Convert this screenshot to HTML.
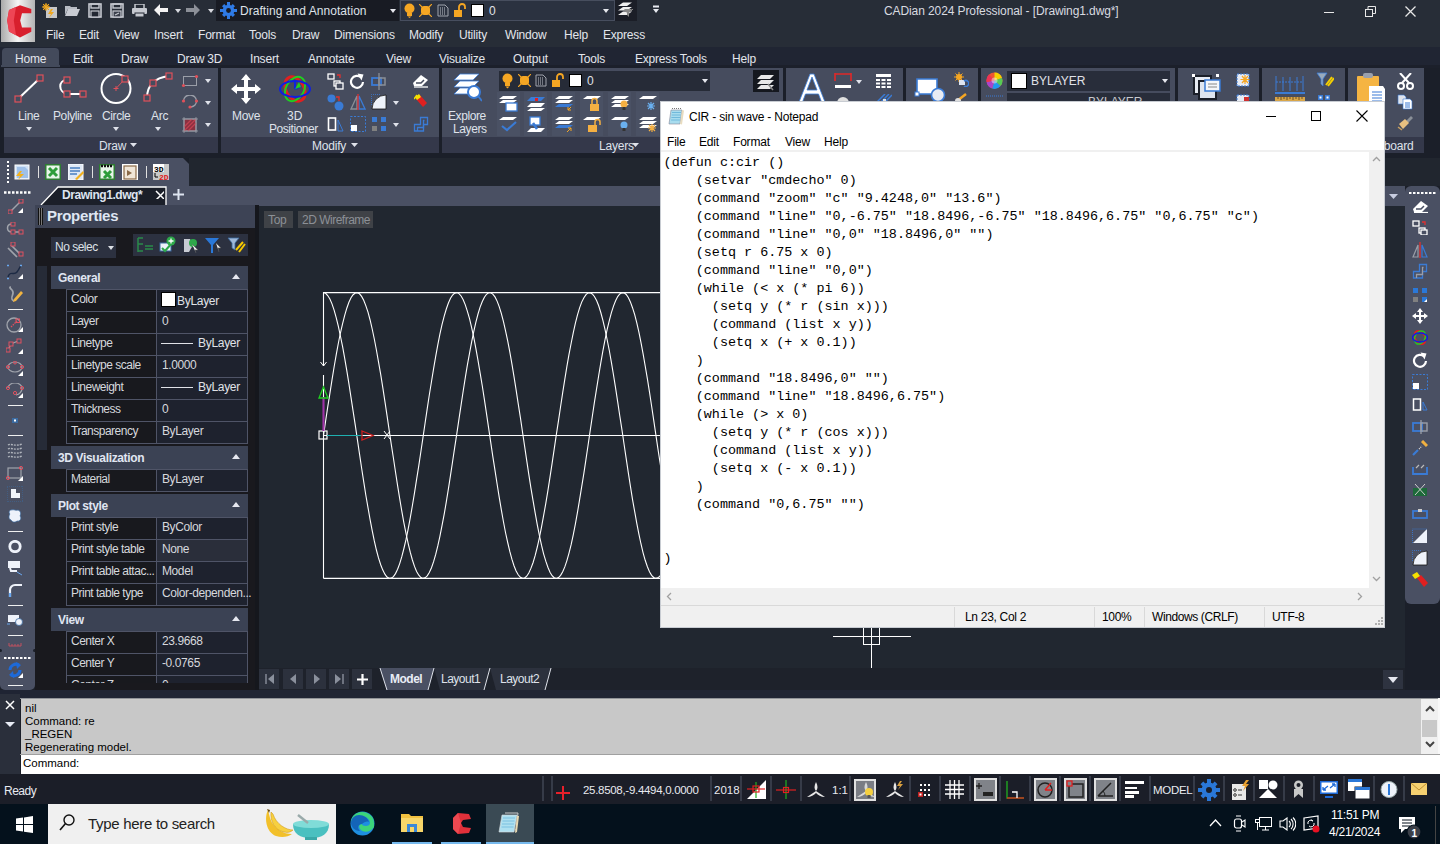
<!DOCTYPE html>
<html><head><meta charset="utf-8">
<style>
*{margin:0;padding:0;box-sizing:border-box}
html,body{width:1440px;height:844px;overflow:hidden;background:#1b1f29;font-family:"Liberation Sans",sans-serif;font-size:12px;color:#e6e8ee}
.a{position:absolute;display:block}
.t{position:absolute;white-space:nowrap;line-height:1}
.m{position:absolute;white-space:pre;line-height:1;font-family:"Liberation Mono",monospace}
</style></head><body>
<div class="a" style="left:0px;top:0px;width:1440px;height:47px;background:#272d37;"></div>
<div class="a" style="left:1px;top:0px;width:34px;height:42px;background:linear-gradient(90deg,#a9a9a9 0%,#f6f6f6 50%,#b4b4b4 100%);"></div>
<svg class="a" style="left:1px;top:0px;" width="34" height="42" viewBox="0 0 34 42"><path d="M19 5.2L30.3 9V13.3H21L19.2 20.4L21 27.5H30.3V31.8L19 37.4L8 31.5L6.2 20.4L8 10Z" fill="#d81f2d"/><path d="M15 7L8 10L6.2 20.4L8 31.5L15 35.3L12.8 20.4Z" fill="#ee4555"/></svg>
<svg class="a" style="left:42px;top:3px;" width="16" height="15" viewBox="0 0 16 15"><rect x="4" y="4" width="11" height="11" fill="#c8c8c8"/><path d="M9 6 L6 11 L9 11 L7 15 L12 9 L9 9 L11 6Z" fill="#f2a81d"/><circle cx="4" cy="4" r="2.2" fill="none" stroke="#f2a81d" stroke-width="1.2"/><path d="M4 0V8M0 4H8M1 1L7 7M7 1L1 7" stroke="#f2a81d" stroke-width="1"/></svg>
<svg class="a" style="left:65px;top:4px;" width="15" height="12" viewBox="0 0 15 12"><path d="M0 2H5L6 3H12V5H3L0 11Z" fill="#b8bcc4"/><path d="M3 5H15L12 12H0Z" fill="#c9ccd3"/></svg>
<svg class="a" style="left:88px;top:3px;" width="14" height="15" viewBox="0 0 14 15"><rect x="1" y="1" width="12" height="13" fill="none" stroke="#c6c9d0" stroke-width="1.6"/><rect x="3" y="1" width="8" height="4" fill="none" stroke="#c6c9d0" stroke-width="1.4"/><rect x="3" y="8" width="8" height="6" fill="#232833" stroke="#c6c9d0" stroke-width="1.2"/></svg>
<svg class="a" style="left:110px;top:3px;" width="14" height="15" viewBox="0 0 14 15"><rect x="1" y="1" width="12" height="13" fill="none" stroke="#c6c9d0" stroke-width="1.6"/><rect x="3" y="1" width="8" height="4" fill="none" stroke="#c6c9d0" stroke-width="1.4"/><rect x="3" y="8" width="8" height="6" fill="#3a3f4b" stroke="#c6c9d0" stroke-width="1.2"/><path d="M5 12L9 10" stroke="#c6c9d0" stroke-width="1.2"/></svg>
<svg class="a" style="left:132px;top:4px;" width="15" height="13" viewBox="0 0 15 13"><rect x="3" y="0" width="9" height="5" fill="none" stroke="#c6c9d0" stroke-width="1.5"/><rect x="0" y="4" width="15" height="6" rx="1" fill="#c6c9d0"/><rect x="3" y="9" width="9" height="4" fill="#c6c9d0" stroke="#232833" stroke-width="1"/></svg>
<svg class="a" style="left:154px;top:4px;" width="14" height="12" viewBox="0 0 14 12"><path d="M0 6 L6 0 L6 4 L14 4 L14 8 L6 8 L6 12Z" fill="#f4f4f4"/></svg>
<svg class="a" style="left:175px;top:9px;" width="6" height="4" viewBox="0 0 6 4"><path d="M0 0H6L3.0 4Z" fill="#d8dae0"/></svg>
<svg class="a" style="left:186px;top:4px;" width="14" height="12" viewBox="0 0 14 12"><path d="M14 6 L8 0 L8 4 L0 4 L0 8 L8 8 L8 12Z" fill="#8c9098"/></svg>
<svg class="a" style="left:208px;top:9px;" width="6" height="4" viewBox="0 0 6 4"><path d="M0 0H6L3.0 4Z" fill="#d8dae0"/></svg>
<div class="a" style="left:216px;top:0px;width:183px;height:21px;background:#181b23;"></div>
<svg class="a" style="left:220px;top:2px;" width="17" height="17" viewBox="0 0 17 17"><g fill="#2f7be6"><circle cx="8.5" cy="8.5" r="5.8"/><path d="M7 0H10V3H7ZM7 14H10V17H7ZM0 7H3V10H0ZM14 7H17V10H14Z"/><path d="M2 4.2 L4.2 2 L6 3.8 L3.8 6Z M15 4.2 L12.8 2 L11 3.8 L13.2 6Z M2 12.8 L4.2 15 L6 13.2 L3.8 11Z M15 12.8 L12.8 15 L11 13.2 L13.2 11Z"/></g><circle cx="8.5" cy="8.5" r="2.4" fill="#181b23"/></svg>
<div class="t" style="left:240px;top:5px;font-size:12px;color:#dfe2e8;letter-spacing:0.05px">Drafting and Annotation</div>
<svg class="a" style="left:390px;top:9px;" width="6" height="4" viewBox="0 0 6 4"><path d="M0 0H6L3.0 4Z" fill="#e6e8ee"/></svg>
<div class="a" style="left:400px;top:0px;width:215px;height:21px;background:#2b3240;border:1px solid #474e5e"></div>
<svg class="a" style="left:404px;top:3px;" width="11" height="15" viewBox="0 0 11 15"><circle cx="5.5" cy="5.5" r="5" fill="#f5a623"/><rect x="3" y="10" width="5" height="3" fill="#f5a623"/><path d="M3.5 13.5H7.5L5.5 15Z" fill="#f5a623"/></svg>
<svg class="a" style="left:419px;top:4px;" width="13" height="13" viewBox="0 0 13 13"><rect x="2" y="2" width="9" height="9" rx="3" fill="#f5a623"/><path d="M0 0L3 3M13 0L10 3M0 13L3 10M13 13L10 10" stroke="#f5a623" stroke-width="1.2"/></svg>
<svg class="a" style="left:437px;top:4px;" width="12" height="13" viewBox="0 0 12 13"><path d="M1 1H8L11 4V12H1Z" fill="none" stroke="#a0a4ad" stroke-width="1"/><path d="M3 4H8M3 6H9M3 8H9M3 10H8" stroke="#c0c4cc" stroke-width="1" stroke-dasharray="1 1"/></svg>
<svg class="a" style="left:453px;top:3px;" width="13" height="14" viewBox="0 0 13 14"><rect x="1" y="7" width="8" height="7" fill="#f5a623"/><path d="M6 7V4A3 3 0 0 1 12 4V6" fill="none" stroke="#f5a623" stroke-width="1.8"/></svg>
<div class="a" style="left:471px;top:4px;width:13px;height:13px;background:#ffffff;border:1px solid #000"></div>
<div class="t" style="left:489px;top:5px;font-size:12px;color:#e0e2e8;">0</div>
<svg class="a" style="left:603px;top:9px;" width="6" height="4" viewBox="0 0 6 4"><path d="M0 0H6L3.0 4Z" fill="#e6e8ee"/></svg>
<div class="a" style="left:615px;top:0px;width:22px;height:21px;background:#1b1e27;"></div>
<svg class="a" style="left:617px;top:2px;" width="18" height="16" viewBox="0 0 18 16"><path d="M6 0.5H15L10 4H1Z M6 5H15L10 8.5H1Z M6 9.5H15L10 13H1Z" fill="#f0f0f0"/><path d="M7 7H15L12 11V15L10 13V11Z" fill="#8a8a8a"/><path d="M14 9L16 7" stroke="#888" stroke-width="1"/></svg>
<svg class="a" style="left:653px;top:5px;" width="6" height="9" viewBox="0 0 6 9"><rect x="0" y="0.5" width="6" height="2" fill="#e8eaf0"/><path d="M0 4H6L3 8Z" fill="#e8eaf0"/></svg>
<div class="t" style="left:884px;top:5px;font-size:12px;color:#d9dbe0;letter-spacing:-0.1px">CADian 2024 Professional - [Drawing1.dwg*]</div>
<div class="a" style="left:1324px;top:12px;width:10px;height:1px;background:#e8e8e8;"></div>
<svg class="a" style="left:1365px;top:6px;" width="11" height="11" viewBox="0 0 11 11"><rect x="0.5" y="3.5" width="7" height="7" fill="none" stroke="#e8e8e8"/><path d="M3 3.5V0.5H10.5V7.5H7.5" fill="none" stroke="#e8e8e8"/></svg>
<svg class="a" style="left:1405px;top:6px;" width="11" height="11" viewBox="0 0 11 11"><path d="M0.5 0.5L10.5 10.5M10.5 0.5L0.5 10.5" stroke="#e8e8e8" stroke-width="1.3"/></svg>
<div class="t" style="left:46px;top:29px;font-size:12px;color:#e3e6ec;letter-spacing:-0.2px">File</div>
<div class="t" style="left:79px;top:29px;font-size:12px;color:#e3e6ec;letter-spacing:-0.2px">Edit</div>
<div class="t" style="left:114px;top:29px;font-size:12px;color:#e3e6ec;letter-spacing:-0.2px">View</div>
<div class="t" style="left:154px;top:29px;font-size:12px;color:#e3e6ec;letter-spacing:-0.2px">Insert</div>
<div class="t" style="left:198px;top:29px;font-size:12px;color:#e3e6ec;letter-spacing:-0.2px">Format</div>
<div class="t" style="left:249px;top:29px;font-size:12px;color:#e3e6ec;letter-spacing:-0.2px">Tools</div>
<div class="t" style="left:292px;top:29px;font-size:12px;color:#e3e6ec;letter-spacing:-0.2px">Draw</div>
<div class="t" style="left:334px;top:29px;font-size:12px;color:#e3e6ec;letter-spacing:-0.2px">Dimensions</div>
<div class="t" style="left:409px;top:29px;font-size:12px;color:#e3e6ec;letter-spacing:-0.2px">Modify</div>
<div class="t" style="left:459px;top:29px;font-size:12px;color:#e3e6ec;letter-spacing:-0.2px">Utility</div>
<div class="t" style="left:505px;top:29px;font-size:12px;color:#e3e6ec;letter-spacing:-0.2px">Window</div>
<div class="t" style="left:564px;top:29px;font-size:12px;color:#e3e6ec;letter-spacing:-0.2px">Help</div>
<div class="t" style="left:603px;top:29px;font-size:12px;color:#e3e6ec;letter-spacing:-0.2px">Express</div>
<div class="a" style="left:0px;top:47px;width:1440px;height:21px;background:#202533;"></div>
<div class="a" style="left:0px;top:65px;width:1440px;height:3px;background:#1c202b;"></div>
<div class="a" style="left:2px;top:48px;width:57px;height:19px;background:#434a5b;border-radius:4px 4px 0 0"></div>
<div class="a" style="left:1px;top:65px;width:59px;height:2px;background:#434a5b;"></div>
<div class="t" style="left:15px;top:53px;font-size:12px;color:#e3e6ec;letter-spacing:-0.2px">Home</div>
<div class="t" style="left:73px;top:53px;font-size:12px;color:#e3e6ec;letter-spacing:-0.2px">Edit</div>
<div class="t" style="left:121px;top:53px;font-size:12px;color:#e3e6ec;letter-spacing:-0.2px">Draw</div>
<div class="t" style="left:177px;top:53px;font-size:12px;color:#e3e6ec;letter-spacing:-0.2px">Draw 3D</div>
<div class="t" style="left:250px;top:53px;font-size:12px;color:#e3e6ec;letter-spacing:-0.2px">Insert</div>
<div class="t" style="left:308px;top:53px;font-size:12px;color:#e3e6ec;letter-spacing:-0.2px">Annotate</div>
<div class="t" style="left:386px;top:53px;font-size:12px;color:#e3e6ec;letter-spacing:-0.2px">View</div>
<div class="t" style="left:439px;top:53px;font-size:12px;color:#e3e6ec;letter-spacing:-0.2px">Visualize</div>
<div class="t" style="left:513px;top:53px;font-size:12px;color:#e3e6ec;letter-spacing:-0.2px">Output</div>
<div class="t" style="left:578px;top:53px;font-size:12px;color:#e3e6ec;letter-spacing:-0.2px">Tools</div>
<div class="t" style="left:635px;top:53px;font-size:12px;color:#e3e6ec;letter-spacing:-0.2px">Express Tools</div>
<div class="t" style="left:732px;top:53px;font-size:12px;color:#e3e6ec;letter-spacing:-0.2px">Help</div>
<div class="a" style="left:4px;top:68px;width:214px;height:69px;background:#464c5e;"></div>
<div class="a" style="left:4px;top:137px;width:214px;height:16px;background:#34384a;"></div>
<div class="t" style="left:99px;top:140px;font-size:12px;color:#dfe2ea;letter-spacing:-0.2px">Draw</div>
<svg class="a" style="left:130px;top:143px" width="7" height="4"><path d="M0 0H7L3.5 4Z" fill="#dfe2ea"/></svg>
<svg class="a" style="left:12px;top:72px;" width="34" height="34" viewBox="0 0 34 34"><path d="M6 27 L28 6" stroke="#fff" stroke-width="2"/><rect x="3" y="24" width="6" height="6" fill="#464c5e" stroke="#e0505a" stroke-width="1.2"/><rect x="25" y="3" width="6" height="6" fill="#464c5e" stroke="#e0505a" stroke-width="1.2"/></svg>
<div class="t" style="left:18px;top:110px;font-size:12px;color:#dfe2ea;letter-spacing:-0.3px">Line</div>
<svg class="a" style="left:26px;top:127px;" width="6" height="4" viewBox="0 0 6 4"><path d="M0 0H6L3.0 4Z" fill="#dfe2ea"/></svg>
<svg class="a" style="left:56px;top:76px;" width="34" height="26" viewBox="0 0 34 26"><path d="M11 4 C2 4 2 16 11 18 L26 18" fill="none" stroke="#fff" stroke-width="2"/><rect x="8" y="1" width="6" height="6" fill="#464c5e" stroke="#e0505a" stroke-width="1.2"/><rect x="8" y="15" width="6" height="6" fill="#464c5e" stroke="#e0505a" stroke-width="1.2"/><rect x="24" y="15" width="6" height="6" fill="#464c5e" stroke="#e0505a" stroke-width="1.2"/></svg>
<div class="t" style="left:53px;top:110px;font-size:12px;color:#dfe2ea;letter-spacing:-0.4px">Polyline</div>
<svg class="a" style="left:99px;top:72px;" width="34" height="34" viewBox="0 0 34 34"><circle cx="17" cy="16.5" r="14.5" fill="none" stroke="#fff" stroke-width="2"/><path d="M17 16.5L25 8M14.5 16.5H19.5M17 14V19" stroke="#e0505a" stroke-width="1"/><rect x="23" y="4" width="6" height="6" fill="#464c5e" stroke="#e0505a" stroke-width="1.2"/></svg>
<div class="t" style="left:102px;top:110px;font-size:12px;color:#dfe2ea;letter-spacing:-0.4px">Circle</div>
<svg class="a" style="left:113px;top:127px;" width="6" height="4" viewBox="0 0 6 4"><path d="M0 0H6L3.0 4Z" fill="#dfe2ea"/></svg>
<svg class="a" style="left:142px;top:72px;" width="34" height="34" viewBox="0 0 34 34"><path d="M5 26 C5 14 12 6 27 4" fill="none" stroke="#fff" stroke-width="2"/><rect x="2" y="23" width="6" height="6" fill="#464c5e" stroke="#e0505a" stroke-width="1.2"/><rect x="8" y="8" width="6" height="6" fill="#464c5e" stroke="#e0505a" stroke-width="1.2"/><rect x="24" y="1" width="6" height="6" fill="#464c5e" stroke="#e0505a" stroke-width="1.2"/></svg>
<div class="t" style="left:151px;top:110px;font-size:12px;color:#dfe2ea;letter-spacing:-0.3px">Arc</div>
<svg class="a" style="left:155px;top:127px;" width="6" height="4" viewBox="0 0 6 4"><path d="M0 0H6L3.0 4Z" fill="#dfe2ea"/></svg>
<svg class="a" style="left:181px;top:74px;" width="18" height="14" viewBox="0 0 18 14"><rect x="2.5" y="2.5" width="13" height="9" fill="none" stroke="#9a9ea8" stroke-width="1"/><circle cx="2.5" cy="11.5" r="1.6" fill="#e0505a"/><circle cx="15.5" cy="2.5" r="1.6" fill="#e0505a"/></svg>
<svg class="a" style="left:205px;top:79px;" width="6" height="4" viewBox="0 0 6 4"><path d="M0 0H6L3.0 4Z" fill="#dfe2ea"/></svg>
<svg class="a" style="left:181px;top:95px;" width="18" height="14" viewBox="0 0 18 14"><path d="M2.5 6 A6.5 6 0 0 1 15.5 6 A6.5 6 0 0 1 10 12" fill="none" stroke="#9a9ea8" stroke-width="1.4"/><circle cx="2.5" cy="6" r="1.6" fill="#e0505a"/><circle cx="15.5" cy="6" r="1.6" fill="#e0505a"/><circle cx="9" cy="12" r="1.6" fill="#e0505a"/></svg>
<svg class="a" style="left:205px;top:101px;" width="6" height="4" viewBox="0 0 6 4"><path d="M0 0H6L3.0 4Z" fill="#dfe2ea"/></svg>
<svg class="a" style="left:182px;top:117px;" width="16" height="16" viewBox="0 0 16 16"><rect x="2" y="2" width="12" height="12" fill="#8a3040" stroke="#9a9ea8"/><path d="M2 10L10 2M2 14L14 2M6 14L14 6" stroke="#c04050" stroke-width="1.3"/><path d="M0 2H16M0 14H16M2 0V16M14 0V16" stroke="#9a9ea8" stroke-width=".8"/></svg>
<svg class="a" style="left:205px;top:123px;" width="6" height="4" viewBox="0 0 6 4"><path d="M0 0H6L3.0 4Z" fill="#dfe2ea"/></svg>
<div class="a" style="left:221px;top:68px;width:218px;height:69px;background:#464c5e;"></div>
<div class="a" style="left:221px;top:137px;width:218px;height:16px;background:#34384a;"></div>
<div class="t" style="left:312px;top:140px;font-size:12px;color:#dfe2ea;letter-spacing:-0.2px">Modify</div>
<svg class="a" style="left:351px;top:143px" width="7" height="4"><path d="M0 0H7L3.5 4Z" fill="#dfe2ea"/></svg>
<svg class="a" style="left:230px;top:73px;" width="32" height="32" viewBox="0 0 32 32"><path d="M16 1L21 7H18V14H25V11L31 16L25 21V18H18V25H21L16 31L11 25H14V18H7V21L1 16L7 11V14H14V7H11Z" fill="#fff"/></svg>
<div class="t" style="left:232px;top:110px;font-size:12px;color:#dfe2ea;letter-spacing:-0.3px">Move</div>
<svg class="a" style="left:279px;top:74px;" width="33" height="30" viewBox="0 0 33 30"><ellipse cx="16" cy="15" rx="9" ry="13" fill="none" stroke="#e02020" stroke-width="3" transform="rotate(-30 16 15)"/><ellipse cx="16" cy="15" rx="9" ry="13" fill="none" stroke="#20d020" stroke-width="2" transform="rotate(30 16 15)"/><ellipse cx="16" cy="15" rx="15" ry="8" fill="none" stroke="#1020e0" stroke-width="2"/><path d="M16 15L16 6M16 15L22 12" stroke="#1020e0" stroke-width="2"/><path d="M16 15L20 8L22 13Z" fill="#20d020"/></svg>
<div class="t" style="left:287px;top:110px;font-size:12px;color:#dfe2ea;">3D</div>
<div class="t" style="left:269px;top:123px;font-size:12px;color:#dfe2ea;letter-spacing:-0.45px">Positioner</div>
<svg class="a" style="left:327px;top:73px;" width="17" height="17" viewBox="0 0 17 17"><rect x="1" y="1" width="6" height="5" fill="none" stroke="#fff" stroke-width="1.3"/><rect x="7" y="8" width="6" height="5" fill="none" stroke="#fff" stroke-width="1.3"/><rect x="9" y="10" width="7" height="6" fill="#464c5e" stroke="#fff" stroke-width="1.3"/><path d="M10 2L13 2L13 5" fill="none" stroke="#e03030" stroke-width="1.3"/></svg>
<svg class="a" style="left:349px;top:73px;" width="16" height="16" viewBox="0 0 16 16"><path d="M12.2 4.5A6 6 0 1 0 14 9" fill="none" stroke="#fff" stroke-width="2.2"/><path d="M8.5 0.5L14.5 1.5L12.5 7.5Z" fill="#fff"/></svg>
<svg class="a" style="left:371px;top:73px;" width="16" height="17" viewBox="0 0 16 17"><rect x="1" y="5" width="9" height="7" fill="none" stroke="#3a7bd5" stroke-width="1.8"/><path d="M8 0V17" stroke="#8a8e96" stroke-width="1.3"/><rect x="8" y="5" width="6" height="7" fill="none" stroke="#8a8e96" stroke-width="1.5"/></svg>
<svg class="a" style="left:412px;top:74px;" width="17" height="14" viewBox="0 0 17 14"><path d="M9 1L16 6L10 12H2L1 9Z" fill="#fff"/><path d="M4 9H9L12 6" fill="none" stroke="#464c5e" stroke-width="1.5"/><path d="M2 13H16" stroke="#fff" stroke-width="1.3"/></svg>
<svg class="a" style="left:327px;top:94px;" width="17" height="17" viewBox="0 0 17 17"><circle cx="4.5" cy="4.5" r="4" fill="#3a7bd5"/><circle cx="12" cy="12" r="4.5" fill="#3a7bd5"/><path d="M9 3L12 3L12 7" fill="none" stroke="#e03030" stroke-width="1.3"/></svg>
<svg class="a" style="left:350px;top:94px;" width="16" height="16" viewBox="0 0 16 16"><path d="M7 2V15H1Z" fill="none" stroke="#8a8e96" stroke-width="1.3"/><path d="M9 2V15H15Z" fill="none" stroke="#3a7bd5" stroke-width="1.3"/><path d="M8 0V16" stroke="#e03030" stroke-width="1.3"/></svg>
<svg class="a" style="left:371px;top:94px;" width="16" height="16" viewBox="0 0 16 16"><path d="M1 15A14 14 0 0 1 15 1V15Z" fill="#eef2fa" stroke="#111" stroke-width=".8"/><path d="M0.5 11V0.5H10" fill="none" stroke="#3a7bd5" stroke-width=".8" stroke-dasharray="1 1"/></svg>
<svg class="a" style="left:393px;top:101px;" width="6" height="4" viewBox="0 0 6 4"><path d="M0 0H6L3.0 4Z" fill="#dfe2ea"/></svg>
<svg class="a" style="left:414px;top:94px;" width="14" height="15" viewBox="0 0 14 15"><path d="M2 5L6 1L13 9L9 13Z" fill="#e02020"/><path d="M1 3L5 0L7 3L3 6Z" fill="#f5e000"/><path d="M0 5L3 1" stroke="#f5e000" stroke-width="1.5"/></svg>
<svg class="a" style="left:327px;top:116px;" width="17" height="17" viewBox="0 0 17 17"><rect x="1.5" y="2" width="7" height="12" fill="none" stroke="#fff" stroke-width="1.6"/><path d="M11 4V15H16Z" fill="none" stroke="#3a7bd5" stroke-width="1"/></svg>
<svg class="a" style="left:350px;top:116px;" width="16" height="16" viewBox="0 0 16 16"><rect x="0.5" y="0.5" width="15" height="15" fill="none" stroke="#3a7bd5" stroke-width="1" stroke-dasharray="2 1.5"/><rect x="1" y="9" width="6" height="6" fill="#fff"/></svg>
<svg class="a" style="left:371px;top:116px;" width="16" height="16" viewBox="0 0 16 16"><rect x="1" y="1" width="5" height="5" fill="#3a7bd5"/><rect x="10" y="1" width="5" height="5" fill="#3a7bd5"/><rect x="1" y="10" width="5" height="5" fill="#808080"/><rect x="10" y="10" width="5" height="5" fill="#3a7bd5"/></svg>
<svg class="a" style="left:393px;top:123px;" width="6" height="4" viewBox="0 0 6 4"><path d="M0 0H6L3.0 4Z" fill="#dfe2ea"/></svg>
<svg class="a" style="left:413px;top:116px;" width="16" height="16" viewBox="0 0 16 16"><path d="M1.5 15V8.5H7.5V1.5H14.5V8.5H10.5V15Z" fill="none" stroke="#3a7bd5" stroke-width="1.3"/><path d="M4.5 15V11.5H10.5V4.5H11.5" fill="none" stroke="#3a7bd5" stroke-width="1.3"/></svg>
<div class="a" style="left:442px;top:68px;width:341px;height:69px;background:#464c5e;"></div>
<div class="a" style="left:442px;top:137px;width:341px;height:16px;background:#34384a;"></div>
<div class="t" style="left:599px;top:140px;font-size:12px;color:#dfe2ea;letter-spacing:-0.2px">Layers</div>
<svg class="a" style="left:632px;top:143px" width="7" height="4"><path d="M0 0H7L3.5 4Z" fill="#dfe2ea"/></svg>
<svg class="a" style="left:452px;top:72px;" width="30" height="32" viewBox="0 0 30 32"><path d="M8 2H27L21 8H2Z M8 9H27L21 15H2Z M8 16H27L21 22H2Z" fill="#fff" stroke="#3a7bd5" stroke-width=".8"/><circle cx="22" cy="20" r="6" fill="#fff" stroke="#3a7bd5" stroke-width="2"/><path d="M26 24L30 29" stroke="#3a7bd5" stroke-width="2"/></svg>
<div class="t" style="left:448px;top:110px;font-size:12px;color:#dfe2ea;letter-spacing:-0.4px">Explore</div>
<div class="t" style="left:453px;top:123px;font-size:12px;color:#dfe2ea;letter-spacing:-0.4px">Layers</div>
<div class="a" style="left:499px;top:71px;width:211px;height:20px;background:#262b37;"></div>
<svg class="a" style="left:502px;top:73px;" width="11" height="16" viewBox="0 0 11 16"><circle cx="5.5" cy="5.5" r="5" fill="#f5a623"/><rect x="3" y="10" width="5" height="3" fill="#f5a623"/><path d="M3.5 13.5H7.5L5.5 15.5Z" fill="#f5a623"/></svg>
<svg class="a" style="left:518px;top:74px;" width="13" height="13" viewBox="0 0 13 13"><rect x="2" y="2" width="9" height="9" rx="3" fill="#f5a623"/><path d="M0 0L3 3M13 0L10 3M0 13L3 10M13 13L10 10" stroke="#f5a623" stroke-width="1.2"/></svg>
<svg class="a" style="left:535px;top:74px;" width="12" height="13" viewBox="0 0 12 13"><path d="M1 1H8L11 4V12H1Z" fill="none" stroke="#a0a4ad" stroke-width="1"/><path d="M3 4H8M3 6H9M3 8H9M3 10H8" stroke="#c0c4cc" stroke-width="1" stroke-dasharray="1 1"/></svg>
<svg class="a" style="left:551px;top:73px;" width="13" height="14" viewBox="0 0 13 14"><rect x="1" y="7" width="8" height="7" fill="#f5a623"/><path d="M6 7V4A3 3 0 0 1 12 4V6" fill="none" stroke="#f5a623" stroke-width="1.8"/></svg>
<div class="a" style="left:569px;top:74px;width:13px;height:13px;background:#ffffff;border:1px solid #000"></div>
<div class="t" style="left:587px;top:75px;font-size:12px;color:#e0e2e8;">0</div>
<svg class="a" style="left:702px;top:79px;" width="6" height="4" viewBox="0 0 6 4"><path d="M0 0H6L3.0 4Z" fill="#e6e8ee"/></svg>
<div class="a" style="left:753px;top:70px;width:26px;height:22px;background:#15181f;"></div>
<svg class="a" style="left:755px;top:71px;" width="22" height="20" viewBox="0 0 22 20"><path d="M6 4H19L15 8H2Z M6 9H19L15 13H2Z M6 14H19L15 18H2Z" fill="#e8e8e8"/><path d="M13 13L18 19" stroke="#888" stroke-width="1.5"/></svg>
<div class="a" style="left:497px;top:92px;width:23px;height:44px;background:#4a5164;"></div>
<div class="a" style="left:524px;top:92px;width:23px;height:44px;background:#4a5164;"></div>
<div class="a" style="left:552px;top:92px;width:23px;height:44px;background:#4a5164;"></div>
<div class="a" style="left:580px;top:92px;width:23px;height:44px;background:#4a5164;"></div>
<div class="a" style="left:608px;top:92px;width:23px;height:44px;background:#4a5164;"></div>
<div class="a" style="left:636px;top:92px;width:23px;height:44px;background:#4a5164;"></div>
<svg class="a" style="left:499px;top:95px;" width="19" height="17" viewBox="0 0 19 17"><path d="M4 1H18L14 4H0Z M4 5H18L14 8H0Z" fill="#fff"/><rect x="7" y="8" width="11" height="8" fill="#fff" stroke="#3a7bd5" stroke-width="1.3"/></svg>
<svg class="a" style="left:499px;top:116px;" width="19" height="17" viewBox="0 0 19 17"><path d="M4 1H18L14 4H0Z" fill="#fff"/><path d="M3 10L8 14L17 6" fill="none" stroke="#3a7bd5" stroke-width="2.2"/></svg>
<svg class="a" style="left:527px;top:95px;" width="18" height="17" viewBox="0 0 18 17"><path d="M4 2H18L14 6H0Z" fill="#3a7bd5"/><path d="M4 8H18L14 12H0Z M4 13H18L14 16H0Z" fill="#fff"/><rect x="8" y="3" width="3" height="3" fill="#e02020"/></svg>
<svg class="a" style="left:527px;top:116px;" width="18" height="17" viewBox="0 0 18 17"><rect x="3" y="1" width="10" height="8" fill="#fff" stroke="#3a7bd5" stroke-width="1.3"/><path d="M4 12H18L14 16H0Z" fill="#fff"/><path d="M6 7L10 13" stroke="#3a7bd5" stroke-width="2.5"/></svg>
<svg class="a" style="left:555px;top:95px;" width="18" height="17" viewBox="0 0 18 17"><path d="M4 1H18L14 4H0Z M4 5H18L14 8H0Z" fill="#fff"/><path d="M4 9H18L14 12H0Z" fill="#3a7bd5"/><path d="M16 12L13 15M13 12V15H16" fill="none" stroke="#f5a623" stroke-width="1"/></svg>
<svg class="a" style="left:555px;top:116px;" width="18" height="17" viewBox="0 0 18 17"><path d="M4 1H18L14 4H0Z M4 5H18L14 8H0Z" fill="#fff"/><path d="M4 9H18L14 12H0Z" fill="#3a7bd5"/><path d="M12 16L16 12M13 12H16V15" fill="none" stroke="#f5a623" stroke-width="1"/></svg>
<svg class="a" style="left:583px;top:95px;" width="18" height="17" viewBox="0 0 18 17"><path d="M4 1H18L14 4H0Z" fill="#fff"/><rect x="7" y="9" width="9" height="7" fill="#f5b042"/><path d="M9 9V6A2.5 2.5 0 0 1 14 6V9" fill="none" stroke="#f5b042" stroke-width="1.5"/></svg>
<svg class="a" style="left:583px;top:116px;" width="18" height="17" viewBox="0 0 18 17"><path d="M4 1H18L14 4H0Z" fill="#fff"/><rect x="5" y="9" width="9" height="7" fill="#f5b042"/><path d="M12 9V6A2.5 2.5 0 0 1 17 6V9" fill="none" stroke="#f5b042" stroke-width="1.5"/></svg>
<svg class="a" style="left:611px;top:95px;" width="18" height="17" viewBox="0 0 18 17"><path d="M4 1H18L14 4H0Z M4 5H18L14 8H0Z M4 9H18L14 12H0Z" fill="#fff"/><circle cx="13" cy="9" r="3.5" fill="#f5b042"/><rect x="11.5" y="12" width="3" height="3" fill="#333"/></svg>
<svg class="a" style="left:611px;top:116px;" width="18" height="17" viewBox="0 0 18 17"><path d="M4 1H18L14 4H0Z" fill="#fff"/><circle cx="13" cy="9" r="3.5" fill="#6ab0f0"/><rect x="11.5" y="12" width="3" height="3" fill="#333"/></svg>
<svg class="a" style="left:639px;top:95px;" width="18" height="17" viewBox="0 0 18 17"><path d="M4 1H18L14 4H0Z" fill="#fff"/><path d="M12 7V15M8 11H16M9 8L15 14M15 8L9 14" stroke="#6ab0f0" stroke-width="1.2"/></svg>
<svg class="a" style="left:639px;top:116px;" width="18" height="17" viewBox="0 0 18 17"><path d="M4 1H18L14 4H0Z M4 5H18L14 8H0Z M4 9H18L14 12H0Z" fill="#fff"/><path d="M13 8V16M9 12H17M10 9L16 15M16 9L10 15" stroke="#f5b042" stroke-width="1.2"/></svg>
<div class="a" style="left:786px;top:68px;width:117px;height:69px;background:#464c5e;"></div>
<div class="a" style="left:786px;top:137px;width:117px;height:16px;background:#34384a;"></div>
<svg class="a" style="left:797px;top:72px;" width="30" height="30" viewBox="0 0 30 30"><path d="M2 30L13 2H17L28 30H24.5L21.5 22H8.5L5.5 30Z M10 18H20L15 5Z" fill="#fff" fill-rule="evenodd" stroke="#3a7bd5" stroke-width=".8"/></svg>
<svg class="a" style="left:833px;top:72px;" width="20" height="18" viewBox="0 0 20 18"><path d="M2 1V9M18 1V9M2 2H18" stroke="#e02828" stroke-width="1.6"/><rect x="2" y="13" width="16" height="3" fill="#fff"/></svg>
<svg class="a" style="left:856px;top:80px;" width="6" height="4" viewBox="0 0 6 4"><path d="M0 0H6L3.0 4Z" fill="#dfe2ea"/></svg>
<svg class="a" style="left:876px;top:74px;" width="15" height="14" viewBox="0 0 15 14"><rect x="0" y="0" width="15" height="3" fill="#fff"/><path d="M0 5H4V7H0ZM5.5 5H9.5V7H5.5ZM11 5H15V7H11ZM0 8.5H4V10.5H0ZM5.5 8.5H9.5V10.5H5.5ZM11 8.5H15V10.5H11ZM0 12H4V14H0ZM5.5 12H9.5V14H5.5ZM11 12H15V14H11Z" fill="#fff"/></svg>
<svg class="a" style="left:836px;top:95px;" width="14" height="8" viewBox="0 0 14 8"><circle cx="7" cy="8" r="6" fill="#e0e0e0"/></svg>
<svg class="a" style="left:877px;top:94px;" width="15" height="8" viewBox="0 0 15 8"><path d="M0 8L8 0M4 8L12 0M8 8L15 1" stroke="#3a7bd5" stroke-width="1.5"/><rect x="6" y="5" width="3" height="3" fill="#e0e0e0"/></svg>
<div class="a" style="left:906px;top:68px;width:72px;height:69px;background:#464c5e;"></div>
<div class="a" style="left:906px;top:137px;width:72px;height:16px;background:#34384a;"></div>
<svg class="a" style="left:914px;top:76px;" width="34" height="26" viewBox="0 0 34 26"><path d="M3 3H23V18H3Z" fill="#fff" stroke="#3a7bd5" stroke-width="1.6"/><circle cx="24" cy="19" r="6.5" fill="#e8ecf4" stroke="#3a7bd5" stroke-width="1.6"/><rect x="1" y="16" width="4" height="4" fill="#fff" stroke="#3a7bd5"/></svg>
<svg class="a" style="left:953px;top:72px;" width="16" height="15" viewBox="0 0 16 15"><circle cx="6" cy="5" r="3" fill="#f5a623"/><path d="M6 0V10M1 5H11M2.5 1.5L9.5 8.5M9.5 1.5L2.5 8.5" stroke="#f5a623" stroke-width="1"/><rect x="6" y="8" width="6" height="5" fill="#dde4f0"/><path d="M11 9A3 3 0 1 1 11 14" fill="none" stroke="#3a7bd5" stroke-width="1.5"/></svg>
<svg class="a" style="left:955px;top:93px;" width="14" height="8" viewBox="0 0 14 8"><path d="M2 8L11 1" stroke="#f5a623" stroke-width="2.5"/><circle cx="3" cy="8" r="3" fill="#ddd"/></svg>
<div class="a" style="left:981px;top:68px;width:194px;height:69px;background:#464c5e;"></div>
<div class="a" style="left:981px;top:137px;width:194px;height:16px;background:#34384a;"></div>
<svg class="a" style="left:986px;top:72px;" width="17" height="17" viewBox="0 0 17 17"><circle cx="8.5" cy="8.5" r="8" fill="#e53"/><path d="M8.5 8.5L8.5 0.5A8 8 0 0 1 16 6Z" fill="#f5d000"/><path d="M8.5 8.5L16 6A8 8 0 0 1 14.5 14Z" fill="#5c5"/><path d="M8.5 8.5L14.5 14A8 8 0 0 1 6 16.5Z" fill="#29e"/><path d="M8.5 8.5L6 16.5A8 8 0 0 1 0.6 10Z" fill="#a4c"/><path d="M8.5 8.5L0.6 10A8 8 0 0 1 3 2.5Z" fill="#e35"/><circle cx="8.5" cy="8.5" r="3" fill="#eee" opacity=".5"/></svg>
<div class="a" style="left:1007px;top:71px;width:163px;height:20px;background:#282d3a;"></div>
<div class="a" style="left:1011px;top:73px;width:16px;height:16px;background:#ffffff;border:1px solid #000"></div>
<div class="t" style="left:1031px;top:75px;font-size:12px;color:#e0e2e8;">BYLAYER</div>
<svg class="a" style="left:1162px;top:79px;" width="6" height="4" viewBox="0 0 6 4"><path d="M0 0H6L3.0 4Z" fill="#e6e8ee"/></svg>
<div class="a" style="left:1007px;top:93px;width:163px;height:10px;background:#282d3a;"></div>
<div class="t" style="left:1088px;top:96px;font-size:12px;color:#c8cad0;">BYLAYER</div>
<svg class="a" style="left:986px;top:94px;" width="17" height="6" viewBox="0 0 17 6"><path d="M0 2H17" stroke="#3a7bd5" stroke-width="1" stroke-dasharray="1 1"/></svg>
<div class="a" style="left:1178px;top:68px;width:81px;height:69px;background:#464c5e;"></div>
<div class="a" style="left:1178px;top:137px;width:81px;height:16px;background:#34384a;"></div>
<svg class="a" style="left:1192px;top:74px;" width="30" height="28" viewBox="0 0 30 28"><rect x="2" y="2" width="17" height="18" fill="#e8ecf4" stroke="#1b1f29" stroke-width="2"/><rect x="7" y="7" width="17" height="18" fill="#dfe5ef" stroke="#1b1f29" stroke-width="2"/><rect x="13" y="6" width="15" height="11" fill="#f4f6fa" stroke="#3a7bd5" stroke-width="1.5"/><path d="M16 10H25M16 13H25" stroke="#888" stroke-width="1"/><rect x="0" y="0" width="3" height="3" fill="#fff"/><rect x="24" y="0" width="3" height="3" fill="#fff"/></svg>
<svg class="a" style="left:1236px;top:73px;" width="14" height="14" viewBox="0 0 14 14"><rect x="1" y="1" width="12" height="12" fill="#e8ecf4" stroke="#3a7bd5" stroke-dasharray="2 1"/><path d="M9 2V11M4.5 6.5H13.5M6 3L12 10M12 3L6 10" stroke="#f5a623" stroke-width="1.2"/></svg>
<svg class="a" style="left:1236px;top:94px;" width="14" height="8" viewBox="0 0 14 8"><rect x="1" y="1" width="12" height="7" fill="#e8ecf4" stroke="#3a7bd5" stroke-dasharray="2 1"/><rect x="8" y="3" width="5" height="4" fill="#d03030"/></svg>
<div class="a" style="left:1262px;top:68px;width:83px;height:69px;background:#464c5e;"></div>
<div class="a" style="left:1262px;top:137px;width:83px;height:16px;background:#34384a;"></div>
<svg class="a" style="left:1275px;top:74px;" width="30" height="28" viewBox="0 0 30 28"><path d="M1 2V17M8 3V17M15 3V17M22 3V17M28 2V17" stroke="#3a7bd5" stroke-width="1"/><path d="M1 8H28" stroke="#3a7bd5" stroke-width="1" stroke-dasharray="2 1"/><rect x="0" y="18" width="30" height="2" fill="#3a7bd5"/><rect x="0" y="23" width="30" height="5" fill="#d9a648"/><path d="M3 23V25M6 23V26M9 23V25M12 23V26M15 23V25M18 23V26M21 23V25M24 23V26M27 23V25" stroke="#705020" stroke-width="1"/></svg>
<svg class="a" style="left:1316px;top:72px;" width="18" height="16" viewBox="0 0 18 16"><path d="M1 1H11L7 7V14L5 12V7Z" fill="#9ab" stroke="#3a7bd5" stroke-width=".8"/><path d="M10 13L16 5M12 14L18 6" stroke="#f5d000" stroke-width="2"/></svg>
<svg class="a" style="left:1317px;top:94px;" width="14" height="8" viewBox="0 0 14 8"><rect x="1" y="1" width="5" height="5" fill="#3a7bd5"/><rect x="8" y="1" width="5" height="5" fill="#3a7bd5"/><rect x="2.5" y="2.5" width="2" height="2" fill="#fff"/><rect x="9.5" y="2.5" width="2" height="2" fill="#fff"/></svg>
<div class="a" style="left:1348px;top:68px;width:76px;height:69px;background:#464c5e;"></div>
<div class="a" style="left:1348px;top:137px;width:76px;height:16px;background:#34384a;"></div>
<div class="t" style="left:1364px;top:140px;font-size:12px;color:#dfe2ea;letter-spacing:-0.2px">Clipboard</div>
<svg class="a" style="left:1357px;top:72px;" width="28" height="34" viewBox="0 0 28 34"><rect x="0" y="4" width="22" height="26" rx="1" fill="#f5b442"/><rect x="6" y="1" width="10" height="5" rx="2" fill="#9aa0ac"/><path d="M12 14H26L28 17V34H12Z" fill="#fff"/><path d="M15 20H25M15 23H25M15 26H25M15 29H25" stroke="#3a7bd5" stroke-width="1.2"/></svg>
<svg class="a" style="left:1397px;top:73px;" width="17" height="17" viewBox="0 0 17 17"><circle cx="4" cy="13" r="3" fill="none" stroke="#fff" stroke-width="2"/><circle cx="13" cy="13" r="3" fill="none" stroke="#fff" stroke-width="2"/><path d="M5 10L14 0M12 10L3 0" stroke="#fff" stroke-width="2"/></svg>
<svg class="a" style="left:1397px;top:94px;" width="16" height="16" viewBox="0 0 16 16"><path d="M1 1H7L9 3V10H1Z" fill="#e0e4ec" stroke="#3a7bd5" stroke-width=".6"/><path d="M6 5H13L15 7V15H6Z" fill="#fff" stroke="#3a7bd5" stroke-width=".6"/><path d="M8 9H13M8 11H13M8 13H13" stroke="#3a7bd5" stroke-width="1"/></svg>
<svg class="a" style="left:1397px;top:115px;" width="17" height="16" viewBox="0 0 17 16"><path d="M9 6L14 1L16 3L11 8Z" fill="#8a9098"/><path d="M2 9L8 4L12 8L6 14Z" fill="#e8c080"/><path d="M1 12L5 15" stroke="#c9a060" stroke-width="1.5"/></svg>
<div class="a" style="left:0px;top:153px;width:1440px;height:538px;background:#1b1f29;"></div>
<div class="a" style="left:189px;top:158px;width:1251px;height:28px;background:#21262f;"></div>
<div class="a" style="left:0px;top:158px;width:189px;height:28px;background:#4a5063;clip-path:polygon(0 0,183px 0,189px 6px,189px 100%,0 100%)"></div>
<svg class="a" style="left:6px;top:160px;" width="4" height="25" viewBox="0 0 4 25"><path d="M2 1V24" stroke="#fff" stroke-width="2" stroke-dasharray="2 2"/></svg>
<svg class="a" style="left:14px;top:164px;" width="16" height="16" viewBox="0 0 16 16"><rect x="1" y="1" width="14" height="14" fill="#cfe0f5" stroke="#fff"/><path d="M3 3H11L14 6V14H3Z" fill="#9fc0e8"/><path d="M6 7L2 12H6L4 16L10 10H6L8 7Z" fill="#f2b01d"/></svg>
<div class="a" style="left:38px;top:166px;width:1px;height:12px;background:#e0e0e0;"></div>
<svg class="a" style="left:45px;top:164px;" width="16" height="16" viewBox="0 0 16 16"><rect x="0" y="0" width="16" height="16" fill="#2e7d32"/><rect x="1.5" y="1.5" width="13" height="13" fill="#e8f5e9"/><path d="M4 4L12 12M12 4L4 12" stroke="#2e9d3a" stroke-width="3"/></svg>
<svg class="a" style="left:68px;top:164px;" width="16" height="16" viewBox="0 0 16 16"><rect x="0" y="0" width="15" height="16" fill="#dfe8f5" stroke="#fff"/><path d="M2 4H12M2 7H12M2 10H9" stroke="#4a7fc0" stroke-width="1.5"/><path d="M7 15L15 7L16 9L9 16Z" fill="#f2b01d"/></svg>
<div class="a" style="left:92px;top:166px;width:1px;height:12px;background:#e0e0e0;"></div>
<svg class="a" style="left:99px;top:164px;" width="16" height="16" viewBox="0 0 16 16"><rect x="0" y="0" width="16" height="16" fill="#2e7d32"/><rect x="1.5" y="1.5" width="13" height="13" fill="#e8f5e9"/><path d="M2 2H14" stroke="#111" stroke-width="2.5" stroke-dasharray="2 1"/><path d="M5 7L12 14M12 7L5 14" stroke="#2e9d3a" stroke-width="3"/></svg>
<svg class="a" style="left:122px;top:164px;" width="16" height="16" viewBox="0 0 16 16"><rect x="0" y="0" width="16" height="16" fill="#fff"/><rect x="2" y="2" width="12" height="13" fill="#f0e6d8" stroke="#8a6a48" stroke-width="1.2"/><path d="M5 6L10 9L5 12Z" fill="#8a6a48"/></svg>
<div class="a" style="left:146px;top:166px;width:1px;height:12px;background:#e0e0e0;"></div>
<svg class="a" style="left:153px;top:164px;" width="16" height="16" viewBox="0 0 16 16"><rect x="0" y="0" width="16" height="16" fill="#c8c8c8"/><rect x="0" y="0" width="11" height="8" fill="#fff"/><text x="1" y="7.5" font-size="8" font-family="Liberation Mono" fill="#000" font-weight="bold">3D</text><text x="6" y="15.5" font-size="8" font-family="Liberation Mono" fill="#e02020" font-weight="bold">2D</text><path d="M2 9V13H5" fill="none" stroke="#000"/></svg>
<div class="a" style="left:35px;top:186px;width:1370px;height:20px;background:#4a5063;"></div>
<div class="a" style="left:0px;top:186px;width:35px;height:504px;background:#4a5063;border-radius:0 0 5px 5px"></div>
<svg class="a" style="left:4px;top:190px;" width="28" height="5" viewBox="0 0 28 5"><path d="M0 2.5H28" stroke="#fff" stroke-width="2.5" stroke-dasharray="2.5 1.5"/></svg>
<svg class="a" style="left:40px;top:186px;" width="128" height="19" viewBox="0 0 128 19"><path d="M1 19L18 1H126V19Z" fill="#1b1f29"/><path d="M1 19L18 1H126V19" fill="none" stroke="#fff" stroke-width="1.3"/></svg>
<div class="t" style="left:62px;top:189px;font-size:12px;color:#dde4f0;font-weight:bold;letter-spacing:-0.45px">Drawing1.dwg*</div>
<svg class="a" style="left:155px;top:190px;" width="9" height="9" viewBox="0 0 9 9"><path d="M1 1L10 10M10 1L1 10" stroke="#fff" stroke-width="1.5"/></svg>
<svg class="a" style="left:173px;top:189px;" width="11" height="11" viewBox="0 0 11 11"><path d="M5.5 0V11M0 5.5H11" stroke="#dde4f0" stroke-width="2"/></svg>
<svg class="a" style="left:1389px;top:194px;" width="9" height="5" viewBox="0 0 9 5"><path d="M0 0H9L4.5 5Z" fill="#c8cde0"/></svg>
<svg class="a" style="left:8px;top:199px;" width="16" height="15" viewBox="0 0 16 15"><path d="M2 13L13 2" stroke="#a0a4ac" stroke-width="1.5"/><rect x="0" y="11" width="4" height="4" fill="#4a5063" stroke="#e05060"/><rect x="11" y="0" width="4" height="4" fill="#4a5063" stroke="#e05060"/></svg>
<svg class="a" style="left:18px;top:208px;" width="5" height="5" viewBox="0 0 5 5"><path d="M5 0V5H0Z" fill="#fff"/></svg>
<svg class="a" style="left:6px;top:222px;" width="18" height="13" viewBox="0 0 18 13"><path d="M6 2C0 2 0 10 6 10H15" fill="none" stroke="#a0a4ac" stroke-width="1.5"/><rect x="5" y="0" width="4" height="4" fill="#4a5063" stroke="#e05060"/><rect x="5" y="8" width="4" height="4" fill="#4a5063" stroke="#e05060"/><rect x="13" y="8" width="4" height="4" fill="#4a5063" stroke="#e05060"/></svg>
<svg class="a" style="left:7px;top:242px;" width="17" height="16" viewBox="0 0 17 16"><path d="M1 6L10 15M4 3L13 12" stroke="#a0a4ac" stroke-width="1.7"/><rect x="4" y="0" width="4" height="4" fill="#4a5063" stroke="#e05060"/><rect x="12" y="10" width="4" height="4" fill="#4a5063" stroke="#e05060"/></svg>
<svg class="a" style="left:6px;top:264px;" width="18" height="16" viewBox="0 0 18 16"><path d="M2 13C4 6 8 12 11 8S14 2 15 2" fill="none" stroke="#1d2a44" stroke-width="1.5"/><path d="M1 1.5H3M2 .5V2.5M14 1.5H16M15 .5V2.5M1 14.5H3M2 13.5V15.5" stroke="#6aa8f0" stroke-width="1"/></svg>
<svg class="a" style="left:18px;top:274px;" width="5" height="5" viewBox="0 0 5 5"><path d="M5 0V5H0Z" fill="#fff"/></svg>
<svg class="a" style="left:7px;top:286px;" width="17" height="17" viewBox="0 0 17 17"><path d="M7 15C1 12 9 8 5 4C3 2 2 1 4 1" fill="none" stroke="#a0a4ac" stroke-width="1.7"/><path d="M7 13L14 5L16 7L9 15L6 16Z" fill="#f2b441"/></svg>
<div class="a" style="left:8px;top:309px;width:15px;height:1px;background:#f0f0f0;"></div>
<svg class="a" style="left:6px;top:317px;" width="18" height="16" viewBox="0 0 18 16"><circle cx="8" cy="8" r="7" fill="none" stroke="#a0a4ac" stroke-width="1.3"/><path d="M5 10L11 4" stroke="#e05060" stroke-width="1.3" stroke-dasharray="1.5 1"/><rect x="10" y="2" width="3.5" height="3.5" fill="none" stroke="#e05060"/></svg>
<svg class="a" style="left:18px;top:327px;" width="5" height="5" viewBox="0 0 5 5"><path d="M5 0V5H0Z" fill="#fff"/></svg>
<svg class="a" style="left:6px;top:338px;" width="18" height="16" viewBox="0 0 18 16"><path d="M2 12L5 6L12 3" fill="none" stroke="#a0a4ac" stroke-width="1.2"/><rect x="0" y="10" width="4" height="4" fill="#4a5063" stroke="#e05060"/><rect x="3" y="4" width="4" height="4" fill="#4a5063" stroke="#e05060"/><rect x="11" y="1" width="4" height="4" fill="#4a5063" stroke="#e05060"/></svg>
<svg class="a" style="left:18px;top:349px;" width="5" height="5" viewBox="0 0 5 5"><path d="M5 0V5H0Z" fill="#fff"/></svg>
<svg class="a" style="left:6px;top:361px;" width="18" height="15" viewBox="0 0 18 15"><ellipse cx="9" cy="6" rx="7" ry="5" fill="none" stroke="#a0a4ac" stroke-width="1.2"/><circle cx="2" cy="6" r="1.6" fill="none" stroke="#e05060"/><circle cx="16" cy="6" r="1.6" fill="none" stroke="#e05060"/><circle cx="9" cy="1.5" r="1.5" fill="none" stroke="#e05060"/></svg>
<svg class="a" style="left:18px;top:371px;" width="5" height="5" viewBox="0 0 5 5"><path d="M5 0V5H0Z" fill="#fff"/></svg>
<svg class="a" style="left:6px;top:383px;" width="18" height="16" viewBox="0 0 18 16"><path d="M2 5A7 5 0 0 1 16 5A7 7 0 0 1 10 12" fill="none" stroke="#a0a4ac" stroke-width="1.2"/><circle cx="2" cy="5" r="1.6" fill="none" stroke="#e05060"/><circle cx="16" cy="5" r="1.6" fill="none" stroke="#e05060"/><circle cx="9" cy="10" r="1.6" fill="none" stroke="#e05060"/></svg>
<svg class="a" style="left:18px;top:393px;" width="5" height="5" viewBox="0 0 5 5"><path d="M5 0V5H0Z" fill="#fff"/></svg>
<div class="a" style="left:8px;top:405px;width:15px;height:1px;background:#f0f0f0;"></div>
<svg class="a" style="left:12px;top:418px;" width="6" height="5" viewBox="0 0 6 5"><rect x="0" y="0" width="6" height="5" fill="#3a6aa0"/><rect x="2" y="1.5" width="2" height="2" fill="#fff"/></svg>
<div class="a" style="left:8px;top:435px;width:15px;height:1px;background:#f0f0f0;"></div>
<svg class="a" style="left:7px;top:442px;" width="16" height="16" viewBox="0 0 16 16"><path d="M1 3C4 1 8 5 15 2M1 7C4 5 8 9 15 6M1 11C4 9 8 13 15 10M1 15C4 13 8 17 15 14" fill="none" stroke="#b0b4bc" stroke-width="1.4" stroke-dasharray="2 1"/></svg>
<svg class="a" style="left:6px;top:466px;" width="18" height="16" viewBox="0 0 18 16"><rect x="2" y="2" width="13" height="10" fill="none" stroke="#a0a4ac" stroke-width="1.2"/><circle cx="2" cy="12" r="1.6" fill="none" stroke="#e05060"/><circle cx="15" cy="2" r="1.6" fill="none" stroke="#e05060"/></svg>
<svg class="a" style="left:18px;top:476px;" width="5" height="5" viewBox="0 0 5 5"><path d="M5 0V5H0Z" fill="#fff"/></svg>
<svg class="a" style="left:7px;top:486px;" width="16" height="16" viewBox="0 0 16 16"><rect x="0" y="0" width="16" height="16" fill="none" stroke="#3a6aa0" stroke-dasharray="1 1"/><path d="M4 3H9V7H13V12H4Z" fill="#f0f4fa"/></svg>
<svg class="a" style="left:8px;top:509px;" width="14" height="14" viewBox="0 0 14 14"><path d="M3 1C6 0 8 2 10 1C13 2 13 5 12 7C14 9 12 13 9 12C7 14 4 13 3 11C0 10 1 6 2 5C0 3 2 1 3 1Z" fill="#eef2fa" stroke="#3a6aa0" stroke-width=".7"/></svg>
<div class="a" style="left:8px;top:531px;width:15px;height:1px;background:#f0f0f0;"></div>
<svg class="a" style="left:8px;top:540px;" width="14" height="13" viewBox="0 0 14 13"><circle cx="7" cy="6.5" r="5.2" fill="none" stroke="#eef2fa" stroke-width="2.8"/></svg>
<svg class="a" style="left:7px;top:560px;" width="16" height="16" viewBox="0 0 16 16"><rect x="1" y="1" width="12" height="7" fill="#eef2fa"/><path d="M3 8L4 11H10" fill="none" stroke="#eef2fa" stroke-width="2"/><path d="M10 12L15 15" stroke="#6aa8f0" stroke-width="1"/></svg>
<svg class="a" style="left:8px;top:583px;" width="15" height="15" viewBox="0 0 15 15"><path d="M2 14V7A5 5 0 0 1 7 2H14" fill="none" stroke="#eef2fa" stroke-width="2.2"/><path d="M2 14V10" stroke="#6aa8f0" stroke-width="2.2"/></svg>
<div class="a" style="left:8px;top:605px;width:15px;height:1px;background:#f0f0f0;"></div>
<svg class="a" style="left:7px;top:614px;" width="16" height="12" viewBox="0 0 16 12"><rect x="1" y="1" width="11" height="7" fill="#eef2fa"/><circle cx="12" cy="8" r="3.5" fill="#eef2fa" stroke="#3a6aa0" stroke-width=".8"/><path d="M0 10L3 10" stroke="#6aa8f0"/></svg>
<div class="a" style="left:8px;top:635px;width:15px;height:1px;background:#f0f0f0;"></div>
<svg class="a" style="left:8px;top:642px;" width="14" height="5" viewBox="0 0 14 5"><path d="M1 4H13M1 1V4M13 1V4M4 2V4M7 2V4M10 2V4" stroke="#c05060" stroke-width="1"/></svg>
<div class="a" style="left:-2px;top:649px;width:4px;height:3px;background:#1b1f29;border-radius:2px"></div>
<div class="a" style="left:33px;top:649px;width:4px;height:3px;background:#1b1f29;border-radius:2px"></div>
<svg class="a" style="left:4px;top:656px;" width="28" height="4" viewBox="0 0 28 4"><path d="M0 2H28" stroke="#fff" stroke-width="2" stroke-dasharray="2.5 1.5"/></svg>
<svg class="a" style="left:7px;top:662px;" width="16" height="16" viewBox="0 0 16 16"><path d="M12 3A6 6 0 0 0 3 8" fill="none" stroke="#1e6ad8" stroke-width="3"/><path d="M4 13A6 6 0 0 0 13 8" fill="none" stroke="#1e6ad8" stroke-width="3"/><path d="M9 0L14 3L10 7Z" fill="#1e6ad8"/><path d="M7 16L2 13L6 9Z" fill="#1e6ad8"/></svg>
<svg class="a" style="left:18px;top:673px;" width="5" height="5" viewBox="0 0 5 5"><path d="M5 0V5H0Z" fill="#fff"/></svg>
<div class="a" style="left:8px;top:685px;width:15px;height:1px;background:#f0f0f0;"></div>
<div class="a" style="left:35px;top:205px;width:220px;height:485px;background:#19191e;"></div>
<div class="a" style="left:35px;top:205px;width:220px;height:23px;background:#3d4355;"></div>
<svg class="a" style="left:38px;top:208px;" width="5" height="17" viewBox="0 0 5 17"><rect x="0" y="0" width="5" height="17" fill="#111"/><path d="M1.5 0.5V17M3.5 0.5V17" stroke="#e0e0e0" stroke-width="1" stroke-dasharray="1 1"/></svg>
<div class="t" style="left:47px;top:208px;font-size:15px;color:#dfe6f2;font-weight:bold;letter-spacing:-0.3px">Properties</div>
<div class="a" style="left:255px;top:205px;width:4px;height:485px;background:#15171d;"></div>
<div class="a" style="left:51px;top:237px;width:65px;height:21px;background:#2c3140;"></div>
<div class="t" style="left:55px;top:241px;font-size:12px;color:#dde0e6;letter-spacing:-0.5px">No selec</div>
<svg class="a" style="left:108px;top:246px;" width="6" height="4" viewBox="0 0 6 4"><path d="M0 0H6L3.0 4Z" fill="#dde0e6"/></svg>
<div class="a" style="left:133px;top:234px;width:115px;height:22px;background:#2c3140;"></div>
<svg class="a" style="left:135px;top:236px;" width="20" height="18" viewBox="0 0 20 18"><path d="M3 2V16M3 2H8M3 8H8M3 15H8" stroke="#2a8a4a" stroke-width="1.5"/><path d="M10 10H18M10 13H18" stroke="#2a8a4a" stroke-width="1.5"/></svg>
<svg class="a" style="left:158px;top:236px;" width="19" height="18" viewBox="0 0 19 18"><rect x="2" y="7" width="11" height="8" fill="#eef2fa" stroke="#3a6aa0"/><path d="M4 12L7 15L14 7" fill="none" stroke="#2ea84a" stroke-width="2"/><circle cx="13" cy="5" r="4.5" fill="#2ea84a"/><path d="M13 2.5V7.5M10.5 5H15.5" stroke="#fff" stroke-width="1.3"/></svg>
<svg class="a" style="left:181px;top:236px;" width="19" height="18" viewBox="0 0 19 18"><path d="M3 3H9L12 9L8 16H3Z" fill="#c8ccd4"/><circle cx="12" cy="7" r="4" fill="#2ea84a"/><path d="M11 8L17 14L14 14L15 17" fill="#eee" stroke="#555" stroke-width=".6"/></svg>
<svg class="a" style="left:204px;top:236px;" width="19" height="18" viewBox="0 0 19 18"><path d="M1 2H15L9 9V17H7V9Z" fill="#2a78d8"/><path d="M12 7L17 12L14 12L15 16" fill="#eee" stroke="#555" stroke-width=".6"/></svg>
<svg class="a" style="left:226px;top:236px;" width="20" height="18" viewBox="0 0 20 18"><path d="M2 2H13L9 7V14L6 12V7Z" fill="#9fb8d8" stroke="#3a6aa0" stroke-width=".8"/><path d="M10 14L17 6M13 16L19 8" stroke="#f5c800" stroke-width="2"/></svg>
<div class="a" style="left:37px;top:266px;width:10px;height:184px;background:#262b37;"></div>
<div class="a" style="left:51px;top:266px;width:197px;height:23px;background:#3b4254;"></div>
<div class="t" style="left:58px;top:272px;font-size:12px;color:#e0e6f2;font-weight:bold;letter-spacing:-0.35px">General</div>
<svg class="a" style="left:232px;top:274px;" width="8" height="5" viewBox="0 0 8 5"><path d="M0 5H8L4 0Z" fill="#e6e8f0"/></svg>
<div class="a" style="left:66px;top:289px;width:182px;height:23px;background:#4f5467;"></div>
<div class="a" style="left:67px;top:290px;width:89px;height:21px;background:#18191e;"></div>
<div class="a" style="left:157px;top:290px;width:90px;height:21px;background:#1e222e;"></div>
<div class="t" style="left:71px;top:293px;font-size:12px;color:#d6d8dd;letter-spacing:-0.5px">Color</div>
<div class="a" style="left:161px;top:292px;width:15px;height:15px;background:#fff;border:1px solid #000"></div>
<div class="t" style="left:177px;top:295px;font-size:12px;color:#e0e2e8;letter-spacing:-0.3px">ByLayer</div>
<div class="a" style="left:66px;top:311px;width:182px;height:23px;background:#4f5467;"></div>
<div class="a" style="left:67px;top:312px;width:89px;height:21px;background:#18191e;"></div>
<div class="a" style="left:157px;top:312px;width:90px;height:21px;background:#1e222e;"></div>
<div class="t" style="left:71px;top:315px;font-size:12px;color:#d6d8dd;letter-spacing:-0.5px">Layer</div>
<div class="t" style="left:162px;top:315px;font-size:12px;color:#d6d8dd;letter-spacing:-0.4px">0</div>
<div class="a" style="left:66px;top:333px;width:182px;height:23px;background:#4f5467;"></div>
<div class="a" style="left:67px;top:334px;width:89px;height:21px;background:#18191e;"></div>
<div class="a" style="left:157px;top:334px;width:90px;height:21px;background:#1e222e;"></div>
<div class="t" style="left:71px;top:337px;font-size:12px;color:#d6d8dd;letter-spacing:-0.5px">Linetype</div>
<div class="a" style="left:161px;top:343px;width:32px;height:1px;background:#e0e2e8;"></div>
<div class="t" style="left:198px;top:337px;font-size:12px;color:#e0e2e8;letter-spacing:-0.3px">ByLayer</div>
<div class="a" style="left:66px;top:355px;width:182px;height:23px;background:#4f5467;"></div>
<div class="a" style="left:67px;top:356px;width:89px;height:21px;background:#18191e;"></div>
<div class="a" style="left:157px;top:356px;width:90px;height:21px;background:#1e222e;"></div>
<div class="t" style="left:71px;top:359px;font-size:12px;color:#d6d8dd;letter-spacing:-0.5px">Linetype scale</div>
<div class="t" style="left:162px;top:359px;font-size:12px;color:#d6d8dd;letter-spacing:-0.4px">1.0000</div>
<div class="a" style="left:66px;top:377px;width:182px;height:23px;background:#4f5467;"></div>
<div class="a" style="left:67px;top:378px;width:89px;height:21px;background:#18191e;"></div>
<div class="a" style="left:157px;top:378px;width:90px;height:21px;background:#1e222e;"></div>
<div class="t" style="left:71px;top:381px;font-size:12px;color:#d6d8dd;letter-spacing:-0.5px">Lineweight</div>
<div class="a" style="left:161px;top:387px;width:32px;height:1px;background:#e0e2e8;"></div>
<div class="t" style="left:198px;top:381px;font-size:12px;color:#e0e2e8;letter-spacing:-0.3px">ByLayer</div>
<div class="a" style="left:66px;top:399px;width:182px;height:23px;background:#4f5467;"></div>
<div class="a" style="left:67px;top:400px;width:89px;height:21px;background:#18191e;"></div>
<div class="a" style="left:157px;top:400px;width:90px;height:21px;background:#1e222e;"></div>
<div class="t" style="left:71px;top:403px;font-size:12px;color:#d6d8dd;letter-spacing:-0.5px">Thickness</div>
<div class="t" style="left:162px;top:403px;font-size:12px;color:#d6d8dd;letter-spacing:-0.4px">0</div>
<div class="a" style="left:66px;top:421px;width:182px;height:23px;background:#4f5467;"></div>
<div class="a" style="left:67px;top:422px;width:89px;height:21px;background:#18191e;"></div>
<div class="a" style="left:157px;top:422px;width:90px;height:21px;background:#1e222e;"></div>
<div class="t" style="left:71px;top:425px;font-size:12px;color:#d6d8dd;letter-spacing:-0.5px">Transparency</div>
<div class="t" style="left:162px;top:425px;font-size:12px;color:#d6d8dd;letter-spacing:-0.4px">ByLayer</div>
<div class="a" style="left:51px;top:446px;width:197px;height:23px;background:#3b4254;"></div>
<div class="t" style="left:58px;top:452px;font-size:12px;color:#e0e6f2;font-weight:bold;letter-spacing:-0.35px">3D Visualization</div>
<svg class="a" style="left:232px;top:454px;" width="8" height="5" viewBox="0 0 8 5"><path d="M0 5H8L4 0Z" fill="#e6e8f0"/></svg>
<div class="a" style="left:66px;top:469px;width:182px;height:23px;background:#4f5467;"></div>
<div class="a" style="left:67px;top:470px;width:89px;height:21px;background:#18191e;"></div>
<div class="a" style="left:157px;top:470px;width:90px;height:21px;background:#1e222e;"></div>
<div class="t" style="left:71px;top:473px;font-size:12px;color:#d6d8dd;letter-spacing:-0.5px">Material</div>
<div class="t" style="left:162px;top:473px;font-size:12px;color:#d6d8dd;letter-spacing:-0.4px">ByLayer</div>
<div class="a" style="left:51px;top:494px;width:197px;height:23px;background:#3b4254;"></div>
<div class="t" style="left:58px;top:500px;font-size:12px;color:#e0e6f2;font-weight:bold;letter-spacing:-0.35px">Plot style</div>
<svg class="a" style="left:232px;top:502px;" width="8" height="5" viewBox="0 0 8 5"><path d="M0 5H8L4 0Z" fill="#e6e8f0"/></svg>
<div class="a" style="left:66px;top:517px;width:182px;height:23px;background:#4f5467;"></div>
<div class="a" style="left:67px;top:518px;width:89px;height:21px;background:#18191e;"></div>
<div class="a" style="left:157px;top:518px;width:90px;height:21px;background:#1e222e;"></div>
<div class="t" style="left:71px;top:521px;font-size:12px;color:#d6d8dd;letter-spacing:-0.5px">Print style</div>
<div class="t" style="left:162px;top:521px;font-size:12px;color:#d6d8dd;letter-spacing:-0.4px">ByColor</div>
<div class="a" style="left:66px;top:539px;width:182px;height:23px;background:#4f5467;"></div>
<div class="a" style="left:67px;top:540px;width:89px;height:21px;background:#18191e;"></div>
<div class="a" style="left:157px;top:540px;width:90px;height:21px;background:#2a2e3a;"></div>
<div class="t" style="left:71px;top:543px;font-size:12px;color:#d6d8dd;letter-spacing:-0.5px">Print style table</div>
<div class="t" style="left:162px;top:543px;font-size:12px;color:#d6d8dd;letter-spacing:-0.4px">None</div>
<div class="a" style="left:66px;top:561px;width:182px;height:23px;background:#4f5467;"></div>
<div class="a" style="left:67px;top:562px;width:89px;height:21px;background:#18191e;"></div>
<div class="a" style="left:157px;top:562px;width:90px;height:21px;background:#1e222e;"></div>
<div class="t" style="left:71px;top:565px;font-size:12px;color:#d6d8dd;letter-spacing:-0.5px">Print table attac...</div>
<div class="t" style="left:162px;top:565px;font-size:12px;color:#d6d8dd;letter-spacing:-0.4px">Model</div>
<div class="a" style="left:66px;top:583px;width:182px;height:23px;background:#4f5467;"></div>
<div class="a" style="left:67px;top:584px;width:89px;height:21px;background:#18191e;"></div>
<div class="a" style="left:157px;top:584px;width:90px;height:21px;background:#1e222e;"></div>
<div class="t" style="left:71px;top:587px;font-size:12px;color:#d6d8dd;letter-spacing:-0.5px">Print table type</div>
<div class="t" style="left:162px;top:587px;font-size:12px;color:#d6d8dd;letter-spacing:-0.4px">Color-dependen...</div>
<div class="a" style="left:51px;top:608px;width:197px;height:23px;background:#3b4254;"></div>
<div class="t" style="left:58px;top:614px;font-size:12px;color:#e0e6f2;font-weight:bold;letter-spacing:-0.35px">View</div>
<svg class="a" style="left:232px;top:616px;" width="8" height="5" viewBox="0 0 8 5"><path d="M0 5H8L4 0Z" fill="#e6e8f0"/></svg>
<div class="a" style="left:66px;top:631px;width:182px;height:23px;background:#4f5467;"></div>
<div class="a" style="left:67px;top:632px;width:89px;height:21px;background:#18191e;"></div>
<div class="a" style="left:157px;top:632px;width:90px;height:21px;background:#1e222e;"></div>
<div class="t" style="left:71px;top:635px;font-size:12px;color:#d6d8dd;letter-spacing:-0.5px">Center X</div>
<div class="t" style="left:162px;top:635px;font-size:12px;color:#d6d8dd;letter-spacing:-0.4px">23.9668</div>
<div class="a" style="left:66px;top:653px;width:182px;height:23px;background:#4f5467;"></div>
<div class="a" style="left:67px;top:654px;width:89px;height:21px;background:#18191e;"></div>
<div class="a" style="left:157px;top:654px;width:90px;height:21px;background:#1e222e;"></div>
<div class="t" style="left:71px;top:657px;font-size:12px;color:#d6d8dd;letter-spacing:-0.5px">Center Y</div>
<div class="t" style="left:162px;top:657px;font-size:12px;color:#d6d8dd;letter-spacing:-0.4px">-0.0765</div>
<div class="a" style="left:66px;top:675px;width:182px;height:23px;background:#4f5467;"></div>
<div class="a" style="left:67px;top:676px;width:89px;height:21px;background:#18191e;"></div>
<div class="a" style="left:157px;top:676px;width:90px;height:21px;background:#1e222e;"></div>
<div class="t" style="left:71px;top:679px;font-size:12px;color:#d6d8dd;letter-spacing:-0.5px">Center Z</div>
<div class="t" style="left:162px;top:679px;font-size:12px;color:#d6d8dd;letter-spacing:-0.4px">0</div>
<div class="a" style="left:35px;top:683px;width:220px;height:7px;background:#19191e;"></div>
<div class="a" style="left:259px;top:206px;width:1146px;height:462px;background:#212730;"></div>
<div class="a" style="left:264px;top:211px;width:29px;height:17px;background:#3f4247;"></div>
<div class="t" style="left:268px;top:214px;font-size:12px;color:#8c9096;letter-spacing:-0.3px">Top</div>
<div class="a" style="left:298px;top:211px;width:75px;height:17px;background:#3f4247;"></div>
<div class="t" style="left:302px;top:214px;font-size:12px;color:#8c9096;letter-spacing:-0.5px">2D Wireframe</div>
<div class="a" style="left:1386px;top:211px;width:14px;height:16px;background:#3f4247;"></div>
<svg class="a" style="left:1388px;top:214px;" width="10" height="10" viewBox="0 0 10 10"><path d="M1 1L9 9M9 1L1 9" stroke="#8c9096" stroke-width="1.2"/></svg>
<svg class="a" style="left:259px;top:206px;" width="1146" height="459" viewBox="0 0 1146 459"><g transform="translate(-259 -206)" fill="none" stroke="#ffffff" stroke-width="1.1"><path d="M323.5 578.381350160749 H722.5009330355638 V292.61864983925096 H323.5 V366"/><path d="M323.5 375 V578.381350160749"/><path d="M323.5 435.5 H722.5009330355638"/><path d="M323.5 435.5 L323.5 435.5 L325.6 421.2 L327.7 407.1 L329.9 393.3 L332.0 379.9 L334.1 367.0 L336.2 354.8 L338.3 343.5 L340.4 333.0 L342.6 323.6 L344.7 315.3 L346.8 308.2 L348.9 302.3 L351.0 297.8 L353.1 294.7 L355.3 293.0 L357.4 292.7 L359.5 293.8 L361.6 296.4 L363.7 300.3 L365.8 305.6 L368.0 312.2 L370.1 320.0 L372.2 329.0 L374.3 339.0 L376.4 350.0 L378.5 361.8 L380.7 374.4 L382.8 387.6 L384.9 401.3 L387.0 415.3 L389.1 429.6 L391.2 443.8 L393.4 458.0 L395.5 472.0 L397.6 485.6 L399.7 498.7 L401.8 511.2 L403.9 522.9 L406.1 533.8 L408.2 543.6 L410.3 552.4 L412.4 560.0 L414.5 566.4 L416.6 571.5 L418.8 575.2 L420.9 577.5 L423.0 578.4 L425.1 577.8 L427.2 575.9 L429.3 572.5 L431.5 567.8 L433.6 561.7 L435.7 554.4 L437.8 545.9 L439.9 536.3 L442.0 525.7 L444.2 514.2 L446.3 501.9 L448.4 488.9 L450.5 475.4 L452.6 461.5 L454.7 447.4 L456.9 433.1 L459.0 418.8 L461.1 404.8 L463.2 391.0 L465.3 377.7 L467.4 364.9 L469.6 352.9 L471.7 341.6 L473.8 331.3 L475.9 322.1 L478.0 314.0 L480.1 307.1 L482.3 301.5 L484.4 297.2 L486.5 294.3 L488.6 292.8 L490.7 292.8 L492.8 294.1 L495.0 296.9 L497.1 301.1 L499.2 306.6 L501.3 313.4 L503.4 321.4 L505.5 330.6 L507.7 340.8 L509.8 351.9 L511.9 363.9 L514.0 376.6 L516.1 389.9 L518.2 403.7 L520.4 417.7 L522.5 432.0 L524.6 446.2 L526.7 460.4 L528.8 474.3 L530.9 487.9 L533.1 500.9 L535.2 513.2 L537.3 524.8 L539.4 535.5 L541.5 545.2 L543.6 553.8 L545.8 561.2 L547.9 567.3 L550.0 572.2 L552.1 575.7 L554.2 577.7 L556.3 578.4 L558.5 577.6 L560.6 575.4 L562.7 571.8 L564.8 566.9 L566.9 560.6 L569.0 553.1 L571.2 544.4 L573.3 534.6 L575.4 523.8 L577.5 512.2 L579.6 499.7 L581.7 486.7 L583.9 473.1 L586.0 459.2 L588.1 445.0 L590.2 430.7 L592.3 416.5 L594.4 402.4 L596.6 388.7 L598.7 375.5 L600.8 362.8 L602.9 350.9 L605.0 339.8 L607.1 329.7 L609.3 320.7 L611.4 312.7 L613.5 306.1 L615.6 300.7 L617.7 296.6 L619.8 294.0 L622.0 292.7 L624.1 292.9 L626.2 294.5 L628.3 297.5 L630.4 301.9 L632.5 307.7 L634.7 314.7 L636.8 322.9 L638.9 332.2 L641.0 342.6 L643.1 353.9 L645.2 366.0 L647.4 378.8 L649.5 392.2 L651.6 406.0 L653.7 420.1 L655.8 434.4 L657.9 448.6 L660.1 462.8 L662.2 476.6 L664.3 490.1 L666.4 503.0 L668.5 515.2 L670.6 526.7 L672.8 537.2 L674.9 546.7 L677.0 555.1 L679.1 562.3 L681.2 568.3 L683.3 572.9 L685.5 576.1 L687.6 577.9 L689.7 578.3 L691.8 577.3 L693.9 574.9 L696.0 571.1 L698.2 565.9 L700.3 559.4 L702.4 551.7 L704.5 542.8 L706.6 532.8 L708.8 521.9 L710.9 510.1 L713.0 497.6 L715.1 484.4 L717.2 470.8 L719.3 456.8 L721.5 442.6 L722.5 435.5"/><path d="M722.5 292.6 L723.6 292.8 L721.5 292.8 L719.3 294.2 L717.2 297.0 L715.1 301.3 L713.0 306.8 L710.9 313.7 L708.8 321.7 L706.6 330.9 L704.5 341.2 L702.4 352.3 L700.3 364.4 L698.2 377.1 L696.0 390.4 L693.9 404.1 L691.8 418.2 L689.7 432.5 L687.6 446.7 L685.5 460.9 L683.3 474.8 L681.2 488.3 L679.1 501.3 L677.0 513.7 L674.9 525.2 L672.8 535.9 L670.6 545.5 L668.5 554.1 L666.4 561.4 L664.3 567.5 L662.2 572.3 L660.1 575.8 L657.9 577.8 L655.8 578.4 L653.7 577.5 L651.6 575.3 L649.5 571.7 L647.4 566.7 L645.2 560.3 L643.1 552.8 L641.0 544.0 L638.9 534.2 L636.8 523.4 L634.7 511.7 L632.5 499.3 L630.4 486.2 L628.3 472.6 L626.2 458.7 L624.1 444.5 L622.0 430.2 L619.8 416.0 L617.7 401.9 L615.6 388.2 L613.5 375.0 L611.4 362.4 L609.3 350.5 L607.1 339.5 L605.0 329.4 L602.9 320.4 L600.8 312.5 L598.7 305.8 L596.6 300.5 L594.4 296.5 L592.3 293.9 L590.2 292.7 L588.1 292.9 L586.0 294.6 L583.9 297.7 L581.7 302.1 L579.6 307.9 L577.5 314.9 L575.4 323.2 L573.3 332.6 L571.2 343.0 L569.0 354.3 L566.9 366.4 L564.8 379.3 L562.7 392.7 L560.6 406.5 L558.5 420.6 L556.3 434.9 L554.2 449.1 L552.1 463.3 L550.0 477.1 L547.9 490.6 L545.8 503.4 L543.6 515.7 L541.5 527.1 L539.4 537.6 L537.3 547.0 L535.2 555.4 L533.1 562.5 L530.9 568.4 L528.8 573.0 L526.7 576.2 L524.6 578.0 L522.5 578.3 L520.4 577.3 L518.2 574.8 L516.1 570.9 L514.0 565.7 L511.9 559.2 L509.8 551.4 L507.7 542.5 L505.5 532.5 L503.4 521.5 L501.3 509.7 L499.2 497.1 L497.1 484.0 L495.0 470.3 L492.8 456.3 L490.7 442.1 L488.6 427.8 L486.5 413.6 L484.4 399.6 L482.3 386.0 L480.1 372.8 L478.0 360.3 L475.9 348.6 L473.8 337.7 L471.7 327.8 L469.6 318.9 L467.4 311.3 L465.3 304.9 L463.2 299.7 L461.1 296.0 L459.0 293.6 L456.9 292.6 L454.7 293.1 L452.6 295.0 L450.5 298.3 L448.4 303.0 L446.3 309.0 L444.2 316.2 L442.0 324.7 L439.9 334.2 L437.8 344.8 L435.7 356.3 L433.6 368.6 L431.5 381.5 L429.3 395.0 L427.2 408.9 L425.1 423.0 L423.0 437.3 L420.9 451.5 L418.8 465.6 L416.6 479.4 L414.5 492.8 L412.4 505.5 L410.3 517.6 L408.2 528.9 L406.1 539.2 L403.9 548.5 L401.8 556.7 L399.7 563.6 L397.6 569.3 L395.5 573.6 L393.4 576.6 L391.2 578.1 L389.1 578.3 L387.0 577.0 L384.9 574.2 L382.8 570.1 L380.7 564.7 L378.5 557.9 L376.4 550.0 L374.3 540.9 L372.2 530.7 L370.1 519.6 L368.0 507.6 L365.8 495.0 L363.7 481.7 L361.6 468.0 L359.5 453.9 L357.4 439.7 L355.3 425.4 L353.1 411.2 L351.0 397.3 L348.9 383.7 L346.8 370.7 L344.7 358.3 L342.6 346.7 L340.4 336.0 L338.3 326.2 L336.2 317.6 L334.1 310.1 L332.0 303.9 L329.9 299.0 L327.7 295.5 L325.6 293.3 L323.5 292.6"/><path d="M320.5 362 L323.5 366 L326.5 362" stroke-width="1"/></g><g transform="translate(-259 -206)"><rect x="319" y="431" width="8" height="8" fill="none" stroke="#fff" stroke-width="1.2"/><path d="M327 435.5H362" stroke="#1fb0b0" stroke-width="1.2"/><path d="M362 431L373 435.5L362 440Z" fill="none" stroke="#d02020" stroke-width="1.3"/><path d="M323.5 431V397" stroke="#a030a8" stroke-width="2"/><path d="M319 398L323.5 387L328 398Z" fill="none" stroke="#20d020" stroke-width="1.3"/><path d="M384 431L390 439M390 431L384 439" stroke="#fff" stroke-width="1"/></g></svg>
<svg class="a" style="left:833px;top:620px;" width="80" height="48" viewBox="0 0 80 48"><path d="M0 16.5H78" stroke="#fff" stroke-width="1"/><path d="M38.5 0V48" stroke="#fff" stroke-width="1"/><rect x="30.5" y="0.5" width="16" height="24" fill="none" stroke="#fff" stroke-width="1"/></svg>
<div class="a" style="left:259px;top:668px;width:1146px;height:22px;background:#1e222b;"></div>
<div class="a" style="left:259px;top:669px;width:20px;height:20px;background:#2c313d;"></div>
<div class="a" style="left:283px;top:669px;width:20px;height:20px;background:#2c313d;"></div>
<div class="a" style="left:306px;top:669px;width:20px;height:20px;background:#2c313d;"></div>
<div class="a" style="left:329px;top:669px;width:20px;height:20px;background:#2c313d;"></div>
<div class="a" style="left:352px;top:669px;width:20px;height:20px;background:#2c313d;"></div>
<svg class="a" style="left:265px;top:674px;" width="9" height="10" viewBox="0 0 9 10"><path d="M1 0V10" stroke="#8a909c" stroke-width="1.4"/><path d="M9 0V10L3 5Z" fill="#8a909c"/></svg>
<svg class="a" style="left:290px;top:674px;" width="7" height="10" viewBox="0 0 7 10"><path d="M6 0V10L0 5Z" fill="#8a909c"/></svg>
<svg class="a" style="left:313px;top:674px;" width="7" height="10" viewBox="0 0 7 10"><path d="M1 0V10L7 5Z" fill="#8a909c"/></svg>
<svg class="a" style="left:335px;top:674px;" width="9" height="10" viewBox="0 0 9 10"><path d="M8 0V10" stroke="#8a909c" stroke-width="1.4"/><path d="M0 0V10L6 5Z" fill="#8a909c"/></svg>
<svg class="a" style="left:357px;top:674px;" width="11" height="11" viewBox="0 0 11 11"><path d="M5.5 0V11M0 5.5H11" stroke="#fff" stroke-width="2.2"/></svg>
<svg class="a" style="left:378px;top:668px;" width="176" height="22" viewBox="0 0 176 22"><path d="M2 0L9 22H50L56 0Z" fill="#4a5063"/><path d="M56 0L50 22M56 0L62 22H106L112 0Z" fill="#2c313d"/><path d="M112 0L106 22M112 0L118 22H167L173 0Z" fill="#2c313d"/><path d="M2 0L9 22" stroke="#dfe2ea" stroke-width="1"/><path d="M56 0L50 22M112 0L106 22M173 0L167 22" stroke="#dfe2ea" stroke-width="1"/></svg>
<div class="t" style="left:390px;top:673px;font-size:12px;color:#e8ecf5;font-weight:bold;letter-spacing:-0.5px">Model</div>
<div class="t" style="left:441px;top:673px;font-size:12px;color:#dfe2ea;letter-spacing:-0.5px">Layout1</div>
<div class="t" style="left:500px;top:673px;font-size:12px;color:#dfe2ea;letter-spacing:-0.5px">Layout2</div>
<div class="a" style="left:1383px;top:670px;width:20px;height:19px;background:#2e3340;"></div>
<svg class="a" style="left:1388px;top:677px;" width="10" height="6" viewBox="0 0 10 6"><path d="M0 0H10L5.0 6Z" fill="#e6e8f0"/></svg>
<div class="a" style="left:0px;top:690px;width:1440px;height:8px;background:#1f2433;"></div>
<div class="a" style="left:0px;top:694px;width:20px;height:80px;background:#2a2f3b;"></div>
<svg class="a" style="left:5px;top:700px;" width="10" height="10" viewBox="0 0 10 10"><path d="M1 1L9 9M9 1L1 9" stroke="#fff" stroke-width="1.5"/></svg>
<svg class="a" style="left:5px;top:722px;" width="10" height="5" viewBox="0 0 10 5"><path d="M0 0H10L5.0 5Z" fill="#e8ecf5"/></svg>
<div class="a" style="left:20px;top:698px;width:1420px;height:1px;background:#8f9298;"></div>
<div class="a" style="left:21px;top:699px;width:1400px;height:55px;background:#c8c8c8;"></div>
<div class="t" style="left:25px;top:703px;font-size:11.5px;color:#000;letter-spacing:0px">nil</div>
<div class="t" style="left:25px;top:716px;font-size:11.5px;color:#000;letter-spacing:0px">Command: re</div>
<div class="t" style="left:25px;top:729px;font-size:11.5px;color:#000;letter-spacing:0px">_REGEN</div>
<div class="t" style="left:25px;top:742px;font-size:11.5px;color:#000;letter-spacing:0px">Regenerating model.</div>
<div class="a" style="left:1421px;top:699px;width:17px;height:55px;background:#f0f0f0;"></div>
<div class="a" style="left:1438px;top:698px;width:2px;height:76px;background:#f8f8f8;"></div>
<svg class="a" style="left:1425px;top:705px;" width="10" height="7" viewBox="0 0 10 7"><path d="M1 6L5 2L9 6" fill="none" stroke="#444" stroke-width="2"/></svg>
<div class="a" style="left:1422px;top:720px;width:15px;height:17px;background:#c8c8c8;"></div>
<svg class="a" style="left:1425px;top:741px;" width="10" height="7" viewBox="0 0 10 7"><path d="M1 1L5 5L9 1" fill="none" stroke="#444" stroke-width="2"/></svg>
<div class="a" style="left:20px;top:754px;width:1420px;height:1px;background:#a0a0a0;"></div>
<div class="a" style="left:21px;top:755px;width:1419px;height:19px;background:#ffffff;"></div>
<div class="t" style="left:23px;top:758px;font-size:11.5px;color:#000;">Command:</div>
<div class="a" style="left:0px;top:774px;width:1440px;height:30px;background:#1b1e28;"></div>
<div class="t" style="left:4px;top:785px;font-size:12px;color:#e8eaf0;letter-spacing:-0.5px">Ready</div>
<div class="a" style="left:542px;top:776px;width:2px;height:25px;background:#363b48;"></div>
<div class="a" style="left:551px;top:776px;width:2px;height:25px;background:#363b48;"></div>
<div class="a" style="left:710px;top:776px;width:2px;height:25px;background:#363b48;"></div>
<div class="a" style="left:740px;top:776px;width:2px;height:25px;background:#363b48;"></div>
<div class="a" style="left:770px;top:776px;width:2px;height:25px;background:#363b48;"></div>
<div class="a" style="left:800px;top:776px;width:2px;height:25px;background:#363b48;"></div>
<div class="a" style="left:849px;top:776px;width:2px;height:25px;background:#363b48;"></div>
<div class="a" style="left:909px;top:776px;width:2px;height:25px;background:#363b48;"></div>
<div class="a" style="left:939px;top:776px;width:2px;height:25px;background:#363b48;"></div>
<div class="a" style="left:969px;top:776px;width:2px;height:25px;background:#363b48;"></div>
<div class="a" style="left:999px;top:776px;width:2px;height:25px;background:#363b48;"></div>
<div class="a" style="left:1029px;top:776px;width:2px;height:25px;background:#363b48;"></div>
<div class="a" style="left:1059px;top:776px;width:2px;height:25px;background:#363b48;"></div>
<div class="a" style="left:1089px;top:776px;width:2px;height:25px;background:#363b48;"></div>
<div class="a" style="left:1119px;top:776px;width:2px;height:25px;background:#363b48;"></div>
<div class="a" style="left:1149px;top:776px;width:2px;height:25px;background:#363b48;"></div>
<div class="a" style="left:1193px;top:776px;width:2px;height:25px;background:#363b48;"></div>
<div class="a" style="left:1223px;top:776px;width:2px;height:25px;background:#363b48;"></div>
<div class="a" style="left:1253px;top:776px;width:2px;height:25px;background:#363b48;"></div>
<div class="a" style="left:1283px;top:776px;width:2px;height:25px;background:#363b48;"></div>
<div class="a" style="left:1313px;top:776px;width:2px;height:25px;background:#363b48;"></div>
<div class="a" style="left:1343px;top:776px;width:2px;height:25px;background:#363b48;"></div>
<div class="a" style="left:1373px;top:776px;width:2px;height:25px;background:#363b48;"></div>
<div class="a" style="left:1403px;top:776px;width:2px;height:25px;background:#363b48;"></div>
<svg class="a" style="left:556px;top:786px;" width="14" height="14" viewBox="0 0 14 14"><path d="M7 0V14M0 7H14" stroke="#e8202a" stroke-width="2"/></svg>
<div class="t" style="left:583px;top:785px;font-size:11.5px;color:#e8eaf0;letter-spacing:-0.3px">25.8508,-9.4494,0.0000</div>
<div class="t" style="left:714px;top:785px;font-size:11.5px;color:#e8eaf0;">2018</div>
<svg class="a" style="left:747px;top:780px;" width="19" height="19" viewBox="0 0 19 19"><path d="M0 19L19 0V19Z" fill="#fff"/><path d="M9 2V18" stroke="#20b020" stroke-width="1.2"/><path d="M0 9H18" stroke="#e02020" stroke-width="1.2"/><rect x="6" y="6" width="6" height="6" fill="none" stroke="#e02020" stroke-width="1.2"/></svg>
<svg class="a" style="left:776px;top:780px;" width="20" height="19" viewBox="0 0 20 19"><path d="M10 0V19" stroke="#20b020" stroke-width="1.2"/><path d="M0 10H20" stroke="#e02020" stroke-width="1.2"/><rect x="7.5" y="7.5" width="5" height="5" fill="none" stroke="#e02020" stroke-width="1.2"/></svg>
<svg class="a" style="left:806px;top:781px;" width="20" height="17" viewBox="0 0 20 17"><path d="M10 1C12 5 12 8 10 10C13 12 16 14 19 16C15 16 12 14 10 12C8 14 5 16 1 16C4 14 7 12 10 10C8 8 8 5 10 1Z" fill="#e8e8e8"/></svg>
<div class="t" style="left:832px;top:785px;font-size:11.5px;color:#e8eaf0;">1:1</div>
<div class="a" style="left:854px;top:779px;width:22px;height:22px;background:#7a7d84;border:2px solid #e0e0e0"></div>
<svg class="a" style="left:856px;top:781px;" width="18" height="18" viewBox="0 0 18 18"><path d="M10 1C12 5 12 8 10 10C13 12 16 14 19 16C15 16 12 14 10 12C8 14 5 16 1 16C4 14 7 12 10 10C8 8 8 5 10 1Z" fill="#d8d8d8"/><circle cx="13" cy="11" r="4" fill="#f5d040"/><rect x="11.5" y="14" width="3" height="3" fill="#555"/></svg>
<svg class="a" style="left:885px;top:781px;" width="20" height="18" viewBox="0 0 20 18"><path d="M10 1C12 5 12 8 10 10C13 12 16 14 19 16C15 16 12 14 10 12C8 14 5 16 1 16C4 14 7 12 10 10C8 8 8 5 10 1Z" fill="#e8e8e8"/><path d="M15 0L12 5H15L13 9L18 3H15L17 0Z" fill="#d8a040"/></svg>
<svg class="a" style="left:918px;top:783px;" width="14" height="14" viewBox="0 0 14 14"><g fill="#fff"><rect x="2" y="1" width="2" height="2"/><rect x="6" y="1" width="2" height="2"/><rect x="10" y="1" width="2" height="2"/><rect x="2" y="6" width="2" height="2"/><rect x="6" y="6" width="2" height="2"/><rect x="10" y="6" width="2" height="2"/><rect x="6" y="11" width="2" height="2"/><rect x="10" y="11" width="2" height="2"/></g><rect x="0" y="9" width="5" height="5" fill="#c02020"/><rect x="1.5" y="10.5" width="2" height="2" fill="#fff"/></svg>
<svg class="a" style="left:945px;top:780px;" width="19" height="19" viewBox="0 0 19 19"><path d="M5 0V19M9.5 0V19M14 0V19M0 5H19M0 9.5H19M0 14H19" stroke="#fff" stroke-width="1.3"/></svg>
<div class="a" style="left:974px;top:778px;width:23px;height:23px;background:#808389;border:2px solid #e0e0e0"></div>
<svg class="a" style="left:976px;top:780px;" width="19" height="19" viewBox="0 0 19 19"><path d="M3 3V9M0 6H6" stroke="#222" stroke-width="1.3"/><rect x="7" y="12" width="10" height="4" fill="#222"/></svg>
<svg class="a" style="left:1006px;top:781px;" width="19" height="18" viewBox="0 0 19 18"><path d="M1 0V17H18" fill="none" stroke="#20b020" stroke-width="1.3"/><path d="M1 17H18" stroke="#e02020" stroke-width="1.3"/><path d="M6 11H11V17" fill="none" stroke="#fff" stroke-width="1.3"/></svg>
<div class="a" style="left:1034px;top:778px;width:23px;height:23px;background:#808389;border:2px solid #e0e0e0"></div>
<svg class="a" style="left:1036px;top:780px;" width="19" height="19" viewBox="0 0 19 19"><circle cx="9" cy="10" r="7" fill="none" stroke="#222" stroke-width="1.5"/><path d="M9 10L15 3M9 10H16" stroke="#e02020" stroke-width="1.5"/></svg>
<div class="a" style="left:1064px;top:778px;width:23px;height:23px;background:#808389;border:2px solid #e0e0e0"></div>
<svg class="a" style="left:1066px;top:780px;" width="19" height="19" viewBox="0 0 19 19"><rect x="3" y="4" width="14" height="13" fill="none" stroke="#222" stroke-width="1.5"/><rect x="1" y="1" width="5" height="5" fill="#808389" stroke="#e02020" stroke-width="1.3"/></svg>
<div class="a" style="left:1094px;top:778px;width:23px;height:23px;background:#808389;border:2px solid #e0e0e0"></div>
<svg class="a" style="left:1096px;top:780px;" width="19" height="19" viewBox="0 0 19 19"><path d="M2 16H17M2 16L15 3" fill="none" stroke="#222" stroke-width="1.5"/><path d="M9 16A7 7 0 0 0 7 11" fill="none" stroke="#222" stroke-width="1"/></svg>
<svg class="a" style="left:1125px;top:781px;" width="20" height="17" viewBox="0 0 20 17"><rect x="0" y="0" width="19" height="3" fill="#fff"/><rect x="0" y="6" width="19" height="2" fill="#fff"/><rect x="0" y="10" width="14" height="3" fill="#fff"/><rect x="0" y="14" width="9" height="3" fill="#fff"/><rect x="12" y="6" width="7" height="2" fill="#1b1e28"/></svg>
<div class="t" style="left:1153px;top:785px;font-size:11.5px;color:#e8eaf0;letter-spacing:-0.3px">MODEL</div>
<svg class="a" style="left:1198px;top:779px;" width="22" height="22" viewBox="0 0 22 22"><g fill="#2a78d8"><circle cx="11" cy="11" r="7.5"/><path d="M9 0H13V4H9ZM9 18H13V22H9ZM0 9H4V13H0ZM18 9H22V13H18Z"/><path d="M2.5 5.3L5.3 2.5L8 5.2L5.2 8ZM19.5 5.3L16.7 2.5L14 5.2L16.8 8ZM2.5 16.7L5.3 19.5L8 16.8L5.2 14ZM19.5 16.7L16.7 19.5L14 16.8L16.8 14Z"/></g><circle cx="11" cy="11" r="3" fill="#1b1e28"/></svg>
<svg class="a" style="left:1231px;top:780px;" width="19" height="20" viewBox="0 0 19 20"><rect x="1" y="4" width="14" height="16" fill="#e8e8e8"/><circle cx="4" cy="10" r="1.3" fill="none" stroke="#333"/><circle cx="4" cy="15" r="1.3" fill="none" stroke="#333"/><path d="M7 10H11M7 15H11" stroke="#333"/><path d="M15 0L11 6H14L12 11L18 4H15L18 0Z" fill="#e8a030"/></svg>
<svg class="a" style="left:1259px;top:780px;" width="19" height="19" viewBox="0 0 19 19"><rect x="0" y="0" width="9" height="9" fill="#fff"/><circle cx="14" cy="5" r="4.5" fill="#fff"/><path d="M9 9L18 18H0Z" fill="#fff"/></svg>
<svg class="a" style="left:1292px;top:780px;" width="13" height="19" viewBox="0 0 13 19"><circle cx="6.5" cy="5" r="4.5" fill="#c8c8c8"/><circle cx="6.5" cy="5" r="2" fill="#1b1e28"/><path d="M2 9L2 18L6.5 14L11 18V9" fill="#c8c8c8"/></svg>
<svg class="a" style="left:1320px;top:780px;" width="18" height="19" viewBox="0 0 18 19"><rect x="0" y="1" width="18" height="13" fill="#1e6ad8"/><rect x="1.5" y="2.5" width="15" height="10" fill="#fff"/><path d="M3 10L8 6M3 10V7M3 10H6M15 4L10 8M15 4V7M15 4H12" stroke="#1e6ad8" stroke-width="1.3" fill="none"/><rect x="5" y="16" width="8" height="2" fill="#1e6ad8"/></svg>
<svg class="a" style="left:1348px;top:779px;" width="22" height="20" viewBox="0 0 22 20"><rect x="0" y="0" width="14" height="12" fill="#fff"/><rect x="0" y="0" width="14" height="3" fill="#2a78d8"/><rect x="7" y="8" width="15" height="12" fill="#fff" stroke="#1b1e28"/><rect x="7" y="8" width="15" height="3" fill="#2a78d8"/></svg>
<svg class="a" style="left:1380px;top:780px;" width="18" height="19" viewBox="0 0 18 19"><circle cx="9" cy="9.5" r="8" fill="#eef2fa" stroke="#9aa" stroke-width="1"/><rect x="8" y="4" width="2" height="11" fill="#2a78d8"/></svg>
<svg class="a" style="left:1411px;top:783px;" width="16" height="12" viewBox="0 0 16 12"><rect x="0" y="0" width="16" height="12" fill="#f5d070"/><path d="M0 0L8 7L16 0" fill="none" stroke="#c09030" stroke-width="1"/></svg>
<div class="a" style="left:0px;top:804px;width:1440px;height:40px;background:#04111c;"></div>
<svg class="a" style="left:16px;top:816px;" width="17" height="17" viewBox="0 0 17 17"><path d="M0 2.5L7 1.5V8H0ZM8 1.4L17 0V8H8ZM0 9H7V15.5L0 14.5ZM8 9H17V17L8 15.7Z" fill="#fff"/></svg>
<div class="a" style="left:48px;top:804px;width:288px;height:40px;background:#f0f0f0;"></div>
<svg class="a" style="left:59px;top:814px;" width="16" height="18" viewBox="0 0 16 18"><circle cx="10" cy="6" r="5" fill="none" stroke="#111" stroke-width="1.4"/><path d="M6.5 9.5L1 16" stroke="#111" stroke-width="1.6"/></svg>
<div class="t" style="left:88px;top:816px;font-size:15px;color:#222;letter-spacing:-0.3px">Type here to search</div>
<svg class="a" style="left:262px;top:808px;" width="34" height="32" viewBox="0 0 34 32"><path d="M6 2C2 10 4 24 14 28C20 30 26 29 30 26C22 26 12 22 8 10Z" fill="#f2c02a"/><path d="M9 4C8 12 12 22 22 24C26 25 29 24 31 22C24 22 14 16 11 6Z" fill="#f7d040" stroke="#c89010" stroke-width=".5"/><path d="M5 1L8 2L7 5Z" fill="#6a4a10"/></svg>
<svg class="a" style="left:292px;top:814px;" width="38" height="26" viewBox="0 0 38 26"><path d="M1 10H37C37 20 30 24 19 24C8 24 1 20 1 10Z" fill="#4ac0c0"/><ellipse cx="19" cy="10" rx="18" ry="4" fill="#80dcd8"/><path d="M6 1L16 9" stroke="#9aa" stroke-width="2.5"/><rect x="13" y="23" width="12" height="3" fill="#3aa8a8"/></svg>
<svg class="a" style="left:350px;top:811px;" width="25" height="25" viewBox="0 0 25 25"><circle cx="12.5" cy="12.5" r="12" fill="#1e8fe0"/><path d="M24 12C24 5 18 1 12 1C5 1 1 6 1 12C3 7 7 5 11 5C17 5 20 9 20 12C20 14 18 15 16 15C13 15 12 14 12 13C9 13 8 16 11 19C14 22 21 21 24 16Z" fill="#3cd47a"/><path d="M12 13C8 13 7 17 10 20C4 20 1 15 1 12C1 7 5 4 9 4C14 4 18 7 19 11C17 10 14 11 12 13Z" fill="#1464b8"/></svg>
<svg class="a" style="left:401px;top:813px;" width="22" height="20" viewBox="0 0 22 20"><path d="M0 1H8L10 3H22V19H0Z" fill="#f2c240"/><rect x="0" y="5" width="22" height="14" fill="#f7d66a"/><path d="M6 11H16V19H13V14H9V19H6Z" fill="#3a88d8"/></svg>
<div class="a" style="left:392px;top:842px;width:40px;height:2px;background:#76b9ed;"></div>
<svg class="a" style="left:452px;top:812px;" width="19" height="23" viewBox="0 0 19 23"><path d="M6 1L17 2L19 7L11 8L9 11L11 15L19 16L17 21L6 22L1 17V6Z" fill="#e0303a"/><path d="M6 1L9 11L6 22L1 17V6Z" fill="#f05058" opacity=".8"/></svg>
<div class="a" style="left:441px;top:842px;width:40px;height:2px;background:#76b9ed;"></div>
<div class="a" style="left:486px;top:804px;width:48px;height:40px;background:#3a4a54;"></div>
<svg class="a" style="left:498px;top:812px;" width="22" height="23" viewBox="0 0 22 23"><path d="M4 3H19L16 20H1Z" fill="#aee0f0" stroke="#ddd" stroke-width=".6"/><path d="M7 1H20L18 18H17" fill="none" stroke="#ccc" stroke-width="1"/><path d="M5 6H17M4.5 9H16.5M4 12H16M3.5 15H15.5" stroke="#7ac0e0" stroke-width="1"/><path d="M19 4L21 4L19 20L17 21" fill="#e8d8b0"/></svg>
<div class="a" style="left:486px;top:842px;width:48px;height:2px;background:#76b9ed;"></div>
<svg class="a" style="left:1209px;top:819px;" width="13" height="8" viewBox="0 0 13 8"><path d="M1 7L6.5 1L12 7" fill="none" stroke="#fff" stroke-width="1.3"/></svg>
<svg class="a" style="left:1233px;top:815px;" width="13" height="17" viewBox="0 0 13 17"><rect x="1.5" y="4" width="7" height="9" rx="2" fill="none" stroke="#fff" stroke-width="1.2"/><path d="M9 7L12 5V12L9 10" fill="none" stroke="#fff" stroke-width="1.1"/><path d="M3 1H8M3 16H8" stroke="#fff" stroke-width="1"/></svg>
<svg class="a" style="left:1255px;top:817px;" width="17" height="14" viewBox="0 0 17 14"><rect x="4.5" y="0.5" width="12" height="9" fill="none" stroke="#fff"/><path d="M10.5 10V13M7 13H14" stroke="#fff"/><rect x="0.5" y="2.5" width="4" height="3" fill="#04111c" stroke="#fff"/><path d="M2.5 5.5V13" stroke="#fff"/></svg>
<svg class="a" style="left:1279px;top:817px;" width="17" height="14" viewBox="0 0 17 14"><path d="M1 4H4L8 1V13L4 10H1Z" fill="none" stroke="#fff" stroke-width="1.1"/><path d="M10 4A4 4 0 0 1 10 10M12 2A7 7 0 0 1 12 12M14 0.5A9 9 0 0 1 14 13.5" fill="none" stroke="#fff" stroke-width="1.1"/></svg>
<svg class="a" style="left:1303px;top:815px;" width="18" height="18" viewBox="0 0 18 18"><path d="M1 3L15 1V13L1 15Z" fill="none" stroke="#fff" stroke-width="1.2"/><path d="M5 9A3 3 0 0 1 10 6M10 6L8 5M11 8A3 3 0 0 1 6 11" fill="none" stroke="#fff" stroke-width="1"/><circle cx="13" cy="14" r="3.5" fill="#e81123"/></svg>
<div class="t" style="left:1331px;top:809px;font-size:12px;color:#fff;letter-spacing:-0.3px">11:51 PM</div>
<div class="t" style="left:1329px;top:826px;font-size:12px;color:#fff;letter-spacing:-0.25px">4/21/2024</div>
<svg class="a" style="left:1397px;top:815px;" width="26" height="25" viewBox="0 0 26 25"><path d="M2 2H18V14H8L4 18V14H2Z" fill="#fff"/><path d="M5 5H15M5 8H15M5 11H13" stroke="#04111c" stroke-width="1.2"/><circle cx="17" cy="17" r="7" fill="#3a3f48" stroke="#04111c" stroke-width="1.2"/><text x="14.5" y="21.5" font-size="10" font-family="Liberation Sans" font-weight="bold" fill="#fff">1</text></svg>
<div class="a" style="left:1435px;top:806px;width:1px;height:38px;background:#444;"></div>
<div class="a" style="left:1385px;top:206px;width:20px;height:461px;background:#212730;"></div>
<div class="a" style="left:1405px;top:186px;width:35px;height:418px;background:#4a5063;border-radius:6px 6px 6px 6px"></div>
<div class="a" style="left:1424px;top:68px;width:16px;height:85px;background:#1b1f29;"></div>
<svg class="a" style="left:1409px;top:191px;" width="28" height="4" viewBox="0 0 28 4"><path d="M0 2H28" stroke="#fff" stroke-width="2" stroke-dasharray="2.5 1.5"/></svg>
<svg class="a" style="left:1412px;top:200px;" width="16" height="13" viewBox="0 0 16 13"><path d="M9 1L16 6L10 12H2L1 9Z" fill="#fff"/><path d="M4 9H9L12 6" fill="none" stroke="#4a5063" stroke-width="1.5"/><path d="M2 12.5H16" stroke="#fff" stroke-width="1.2"/></svg>
<svg class="a" style="left:1412px;top:220px;" width="16" height="15" viewBox="0 0 16 15"><rect x="1" y="1" width="6" height="5" fill="none" stroke="#fff" stroke-width="1.3"/><rect x="7" y="8" width="6" height="5" fill="none" stroke="#fff" stroke-width="1.3"/><rect x="9" y="10" width="6" height="5" fill="#4a5063" stroke="#fff" stroke-width="1.3"/><path d="M10 2L13 2L13 5" fill="none" stroke="#e03030" stroke-width="1.3"/></svg>
<svg class="a" style="left:1412px;top:242px;" width="16" height="16" viewBox="0 0 16 16"><path d="M6 3V15H1Z" fill="none" stroke="#9a9ea8" stroke-width="1.2"/><path d="M10 3V15H15Z" fill="none" stroke="#3a7bd5" stroke-width="1.2"/><path d="M8 0V16" stroke="#e03030" stroke-width="1.3"/></svg>
<svg class="a" style="left:1412px;top:263px;" width="16" height="16" viewBox="0 0 16 16"><path d="M1.5 15V8.5H7.5V1.5H14.5V8.5H10.5V15Z" fill="none" stroke="#3a7bd5" stroke-width="1.3"/><path d="M4.5 15V11.5H10.5V4.5H11.5" fill="none" stroke="#9a9ea8" stroke-width="1.3"/></svg>
<svg class="a" style="left:1412px;top:287px;" width="16" height="15" viewBox="0 0 16 15"><rect x="1" y="1" width="5" height="5" fill="#2a78d8"/><rect x="10" y="1" width="5" height="5" fill="#2a78d8"/><rect x="1" y="10" width="5" height="5" fill="#808080"/><rect x="10" y="10" width="5" height="5" fill="#2a78d8"/><path d="M12 15L15 12V15Z" fill="#fff"/></svg>
<svg class="a" style="left:1412px;top:308px;" width="16" height="16" viewBox="0 0 16 16"><path d="M8 0L11 4H9V7H12V5L16 8L12 11V9H9V12H11L8 16L5 12H7V9H4V11L0 8L4 5V7H7V4H5Z" fill="#fff"/></svg>
<svg class="a" style="left:1412px;top:329px;" width="16" height="17" viewBox="0 0 16 17"><ellipse cx="8" cy="8.5" rx="5" ry="7" fill="none" stroke="#e02020" stroke-width="2" transform="rotate(-30 8 8.5)"/><ellipse cx="8" cy="8.5" rx="5" ry="7" fill="none" stroke="#20d020" stroke-width="1.4" transform="rotate(30 8 8.5)"/><ellipse cx="8" cy="8.5" rx="7.5" ry="4.5" fill="none" stroke="#1020e0" stroke-width="1.5"/></svg>
<svg class="a" style="left:1412px;top:352px;" width="16" height="16" viewBox="0 0 16 16"><path d="M12.2 4.5A6 6 0 1 0 14 9" fill="none" stroke="#fff" stroke-width="2.2"/><path d="M8.5 0.5L14.5 1.5L12.5 7.5Z" fill="#fff"/></svg>
<svg class="a" style="left:1412px;top:374px;" width="16" height="16" viewBox="0 0 16 16"><rect x="0.5" y="0.5" width="15" height="15" fill="none" stroke="#3a7bd5" stroke-width="1" stroke-dasharray="2 1.5"/><rect x="1" y="9" width="6" height="6" fill="#fff"/></svg>
<svg class="a" style="left:1412px;top:398px;" width="16" height="13" viewBox="0 0 16 13"><rect x="1.5" y="1" width="7" height="11" fill="none" stroke="#fff" stroke-width="1.5"/><path d="M11 4V12H15Z" fill="none" stroke="#3a7bd5" stroke-width="1"/></svg>
<svg class="a" style="left:1412px;top:420px;" width="16" height="14" viewBox="0 0 16 14"><rect x="1" y="3" width="9" height="8" fill="none" stroke="#3a7bd5" stroke-width="1.8"/><path d="M9 0V14" stroke="#9a9ea8" stroke-width="1.3"/><rect x="9" y="3" width="6" height="8" fill="none" stroke="#9a9ea8" stroke-width="1.4"/></svg>
<svg class="a" style="left:1412px;top:440px;" width="16" height="16" viewBox="0 0 16 16"><path d="M1 15L6 10" stroke="#3a7bd5" stroke-width="2.2"/><path d="M7 9L10 6" stroke="#ddd" stroke-width="1.2" stroke-dasharray="1 1"/><path d="M10 1L15 6" stroke="#f0b040" stroke-width="3"/></svg>
<svg class="a" style="left:1412px;top:464px;" width="16" height="11" viewBox="0 0 16 11"><path d="M1 3V10H15V3" fill="none" stroke="#3a7bd5" stroke-width="1.8"/><path d="M4 4L7 1M9 4L12 1" stroke="#bbb" stroke-width="1.2"/></svg>
<svg class="a" style="left:1412px;top:484px;" width="16" height="13" viewBox="0 0 16 13"><rect x="1" y="4" width="14" height="8" fill="#1d6a3a"/><path d="M3 0L13 11M13 0L3 11" stroke="#ccc" stroke-width="1"/></svg>
<svg class="a" style="left:1412px;top:509px;" width="16" height="10" viewBox="0 0 16 10"><rect x="1" y="2" width="14" height="7" fill="none" stroke="#3a7bd5" stroke-width="1.8"/><rect x="6" y="0" width="4" height="3" fill="#ccc"/></svg>
<svg class="a" style="left:1412px;top:528px;" width="16" height="16" viewBox="0 0 16 16"><path d="M1 15H15V1Z" fill="#eef2fa"/><path d="M0.5 15V1H15" fill="none" stroke="#3a7bd5" stroke-width=".8" stroke-dasharray="1 1"/></svg>
<svg class="a" style="left:1412px;top:550px;" width="16" height="16" viewBox="0 0 16 16"><path d="M1 15A14 14 0 0 1 15 1V15Z" fill="#eef2fa" stroke="#111" stroke-width=".8"/><path d="M0.5 11V0.5H10" fill="none" stroke="#3a7bd5" stroke-width=".8" stroke-dasharray="1 1"/></svg>
<svg class="a" style="left:1412px;top:572px;" width="16" height="16" viewBox="0 0 16 16"><path d="M5 6L9 3L16 11L12 15Z" fill="#e02020"/><path d="M0 3L5 0L8 4L3 7Z" fill="#f5e000"/></svg>
<div class="a" style="left:660px;top:101px;width:725px;height:527px;background:#ffffff;border:1px solid #c8ccd2"></div>
<svg class="a" style="left:668px;top:107px;" width="18" height="18" viewBox="0 0 18 18"><path d="M3 3H14L12 17H1Z" fill="#a8dcee" stroke="#889" stroke-width=".6"/><path d="M4 5.5H13M3.7 8H12.7M3.4 10.5H12.4M3.1 13H12.1" stroke="#6ab4d8" stroke-width=".9"/><path d="M14 3L16 3.5L14 17.5L12 17" fill="#e8dcc0"/><path d="M4 1.5H14" stroke="#777" stroke-width="1.2" stroke-dasharray="1 1"/></svg>
<div class="t" style="left:689px;top:111px;font-size:12px;color:#000;letter-spacing:-0.2px">CIR - sin wave - Notepad</div>
<div class="a" style="left:1266px;top:116px;width:10px;height:1px;background:#000;"></div>
<div class="a" style="left:1311px;top:111px;width:10px;height:10px;background:transparent;border:1px solid #000"></div>
<svg class="a" style="left:1356px;top:110px;" width="12" height="12" viewBox="0 0 12 12"><path d="M0.5 0.5L11.5 11.5M11.5 0.5L0.5 11.5" stroke="#000" stroke-width="1.1"/></svg>
<div class="t" style="left:667px;top:136px;font-size:12px;color:#000;letter-spacing:-0.2px">File</div>
<div class="t" style="left:699px;top:136px;font-size:12px;color:#000;letter-spacing:-0.2px">Edit</div>
<div class="t" style="left:733px;top:136px;font-size:12px;color:#000;letter-spacing:-0.2px">Format</div>
<div class="t" style="left:785px;top:136px;font-size:12px;color:#000;letter-spacing:-0.2px">View</div>
<div class="t" style="left:824px;top:136px;font-size:12px;color:#000;letter-spacing:-0.2px">Help</div>
<div class="a" style="left:661px;top:150px;width:723px;height:2px;background:#f0f0f0;"></div>
<div class="m" style="left:663.6px;top:153.5px;font-size:13.42px;line-height:18px;color:#000">(defun c:cir ()
    (setvar "cmdecho" 0)
    (command "zoom" "c" "9.4248,0" "13.6")
    (command "line" "0,-6.75" "18.8496,-6.75" "18.8496,6.75" "0,6.75" "c")
    (command "line" "0,0" "18.8496,0" "")
    (setq r 6.75 x 0)
    (command "line" "0,0")
    (while (&lt; x (* pi 6))
      (setq y (* r (sin x)))
      (command (list x y))
      (setq x (+ x 0.1))
    )
    (command "18.8496,0" "")
    (command "line" "18.8496,6.75")
    (while (&gt; x 0)
      (setq y (* r (cos x)))
      (command (list x y))
      (setq x (- x 0.1))
    )
    (command "0,6.75" "")


)</div>
<div class="a" style="left:1369px;top:152px;width:15px;height:436px;background:#f0f0f0;"></div>
<svg class="a" style="left:1372px;top:156px;" width="9" height="6" viewBox="0 0 9 6"><path d="M1 5L4.5 1.5L8 5" fill="none" stroke="#a0a0a0" stroke-width="1.3"/></svg>
<svg class="a" style="left:1372px;top:576px;" width="9" height="6" viewBox="0 0 9 6"><path d="M1 1L4.5 4.5L8 1" fill="none" stroke="#a0a0a0" stroke-width="1.3"/></svg>
<div class="a" style="left:661px;top:588px;width:723px;height:17px;background:#f0f0f0;"></div>
<svg class="a" style="left:666px;top:592px;" width="6" height="9" viewBox="0 0 6 9"><path d="M5 1L1.5 4.5L5 8" fill="none" stroke="#a0a0a0" stroke-width="1.3"/></svg>
<svg class="a" style="left:1357px;top:592px;" width="6" height="9" viewBox="0 0 6 9"><path d="M1 1L4.5 4.5L1 8" fill="none" stroke="#a0a0a0" stroke-width="1.3"/></svg>
<div class="a" style="left:661px;top:605px;width:723px;height:1px;background:#d9d9d9;"></div>
<div class="a" style="left:661px;top:606px;width:723px;height:21px;background:#f0f0f0;"></div>
<div class="a" style="left:954px;top:607px;width:1px;height:20px;background:#d9d9d9;"></div>
<div class="a" style="left:1094px;top:607px;width:1px;height:20px;background:#d9d9d9;"></div>
<div class="a" style="left:1144px;top:607px;width:1px;height:20px;background:#d9d9d9;"></div>
<div class="a" style="left:1264px;top:607px;width:1px;height:20px;background:#d9d9d9;"></div>
<div class="t" style="left:965px;top:611px;font-size:12px;color:#000;letter-spacing:-0.3px">Ln 23, Col 2</div>
<div class="t" style="left:1102px;top:611px;font-size:12px;color:#000;letter-spacing:-0.3px">100%</div>
<div class="t" style="left:1152px;top:611px;font-size:12px;color:#000;letter-spacing:-0.4px">Windows (CRLF)</div>
<div class="t" style="left:1272px;top:611px;font-size:12px;color:#000;letter-spacing:-0.3px">UTF-8</div>
<svg class="a" style="left:1375px;top:617px;" width="9" height="9" viewBox="0 0 9 9"><g fill="#b0b0b0"><rect x="6" y="0" width="2" height="2"/><rect x="3" y="3" width="2" height="2"/><rect x="6" y="3" width="2" height="2"/><rect x="0" y="6" width="2" height="2"/><rect x="3" y="6" width="2" height="2"/><rect x="6" y="6" width="2" height="2"/></g></svg>
</body></html>
